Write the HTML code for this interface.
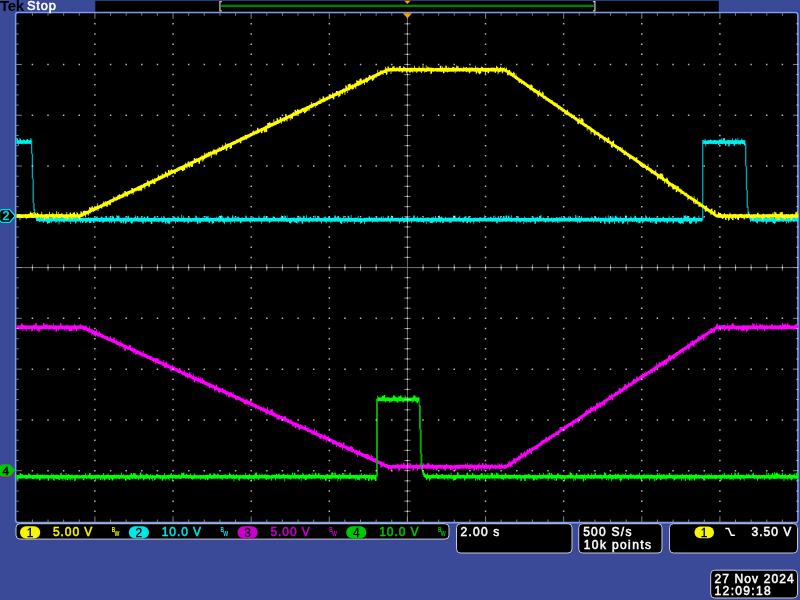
<!DOCTYPE html>
<html><head><meta charset="utf-8"><title>Tek</title>
<style>html,body{margin:0;padding:0;}body{width:800px;height:600px;overflow:hidden;background:#3b4a98;}svg{display:block;}text{font-family:"Liberation Sans",sans-serif;}</style></head><body>
<svg width="800" height="600" viewBox="0 0 800 600">
<rect x="0" y="0" width="800" height="600" fill="#3b4a98"/>
<g transform="scale(0.78125)">
<path d="M21 14.4H1022" stroke="#323f8a" stroke-width="1.4" fill="none"/>
<rect x="122" y="1" width="798" height="15" fill="#000"/>
<rect x="1021" y="15" width="3" height="655" fill="#2f3c8e"/>
<rect x="20" y="16" width="1001.3" height="653" rx="3" ry="3" fill="#000" stroke="#78a0f0" stroke-width="2"/>
<path d="M40.5 178.6V196.7M41.5 196.7V228.9M42.5 228.9V259.7M43.5 259.7V269.8M899.5 179.2V281.8M954.5 183.6V212.6M955.5 212.6V243.3M956.5 243.3V265.8" stroke="#00a8b4" stroke-width="1.7" fill="none"/>
<path d="M21 176.8H22L22 177.2H23L23 179.5H24L24 179.4H25L25 176.7H26L26 177.8H27L27 179.5H28L28 179.4H29L29 179.6H30L30 178.0H31L31 179.2H32L32 179.8H33L33 179.3H34L34 178.2H35L35 178.0H36L36 179.6H37L37 179.5H38L38 179.5H39L39 176.6H40L40 184.3H39L39 184.1H38L38 184.4H37L37 184.0H36L36 184.0H35L35 184.5H34L34 184.1H33L33 184.2H32L32 184.1H31L31 184.7H30L30 183.8H29L29 184.5H28L28 184.4H27L27 184.1H26L26 184.2H25L25 184.1H24L24 185.7H23L23 184.0H22L22 184.2H21ZM44 268.0H45L45 273.2H46L46 276.0H47L47 276.3H48L48 277.2H49L49 279.0H50L50 278.1H51L51 277.1H52L52 277.4H53L53 278.9H54L54 279.1H55L55 279.1H56L56 278.8H57L57 278.8H58L58 278.7H59L59 278.7H60L60 278.4H61L61 278.6H62L62 279.0H63L63 279.0H64L64 278.9H65L65 278.8H66L66 278.9H67L67 277.6H68L68 278.8H69L69 279.0H70L70 278.4H71L71 278.9H72L72 278.9H73L73 278.9H74L74 278.9H75L75 278.6H76L76 278.4H77L77 279.0H78L78 278.9H79L79 279.2H80L80 277.5H81L81 278.9H82L82 279.0H83L83 278.9H84L84 279.1H85L85 278.8H86L86 278.7H87L87 278.6H88L88 278.9H89L89 278.6H90L90 278.3H91L91 275.5H92L92 279.0H93L93 278.7H94L94 277.4H95L95 278.8H96L96 278.6H97L97 278.9H98L98 278.6H99L99 278.9H100L100 276.6H101L101 277.9H102L102 278.7H103L103 278.7H104L104 279.0H105L105 278.7H106L106 278.3H107L107 278.9H108L108 278.9H109L109 278.6H110L110 278.7H111L111 279.0H112L112 278.9H113L113 277.7H114L114 279.0H115L115 278.2H116L116 278.9H117L117 278.7H118L118 278.8H119L119 278.7H120L120 278.3H121L121 278.7H122L122 278.4H123L123 277.5H124L124 276.9H125L125 278.9H126L126 278.9H127L127 279.1H128L128 278.8H129L129 277.5H130L130 277.1H131L131 278.6H132L132 278.6H133L133 278.8H134L134 278.7H135L135 276.5H136L136 276.4H137L137 278.8H138L138 279.0H139L139 277.3H140L140 278.8H141L141 278.2H142L142 279.1H143L143 275.8H144L144 276.9H145L145 277.1H146L146 279.2H147L147 279.2H148L148 279.0H149L149 275.5H150L150 276.6H151L151 276.0H152L152 276.2H153L153 278.7H154L154 278.9H155L155 279.3H156L156 278.6H157L157 278.8H158L158 278.8H159L159 278.8H160L160 278.6H161L161 278.8H162L162 278.8H163L163 276.7H164L164 276.1H165L165 278.6H166L166 278.8H167L167 278.6H168L168 278.4H169L169 278.8H170L170 279.0H171L171 278.3H172L172 278.2H173L173 275.7H174L174 278.9H175L175 276.4H176L176 276.9H177L177 278.7H178L178 278.7H179L179 278.8H180L180 278.4H181L181 278.5H182L182 279.1H183L183 278.8H184L184 277.1H185L185 277.7H186L186 279.1H187L187 278.8H188L188 276.6H189L189 276.9H190L190 279.0H191L191 279.0H192L192 278.9H193L193 278.9H194L194 278.9H195L195 279.0H196L196 278.6H197L197 277.1H198L198 276.6H199L199 278.7H200L200 279.1H201L201 279.3H202L202 278.7H203L203 278.9H204L204 279.0H205L205 279.0H206L206 277.0H207L207 279.1H208L208 278.9H209L209 276.4H210L210 277.0H211L211 278.9H212L212 279.0H213L213 278.9H214L214 278.7H215L215 278.8H216L216 278.5H217L217 279.0H218L218 279.1H219L219 279.0H220L220 279.1H221L221 278.4H222L222 278.4H223L223 277.1H224L224 278.5H225L225 278.7H226L226 279.0H227L227 277.2H228L228 277.2H229L229 278.9H230L230 278.8H231L231 279.2H232L232 274.9H233L233 279.1H234L234 276.3H235L235 278.6H236L236 278.8H237L237 279.0H238L238 279.1H239L239 278.5H240L240 278.9H241L241 278.4H242L242 278.3H243L243 278.9H244L244 279.0H245L245 279.2H246L246 279.0H247L247 278.9H248L248 279.0H249L249 278.7H250L250 275.7H251L251 276.5H252L252 278.8H253L253 278.8H254L254 278.7H255L255 278.4H256L256 279.0H257L257 278.9H258L258 279.0H259L259 278.2H260L260 279.1H261L261 279.1H262L262 278.9H263L263 276.5H264L264 277.0H265L265 277.1H266L266 276.4H267L267 278.9H268L268 278.5H269L269 278.8H270L270 279.1H271L271 278.9H272L272 278.9H273L273 279.0H274L274 278.8H275L275 278.8H276L276 278.9H277L277 277.5H278L278 279.0H279L279 277.4H280L280 278.7H281L281 276.1H282L282 276.3H283L283 275.4H284L284 276.6H285L285 278.8H286L286 278.5H287L287 279.3H288L288 278.8H289L289 278.8H290L290 278.4H291L291 276.2H292L292 277.0H293L293 278.7H294L294 278.6H295L295 279.3H296L296 278.8H297L297 275.6H298L298 277.1H299L299 279.3H300L300 278.2H301L301 278.8H302L302 278.7H303L303 278.8H304L304 277.4H305L305 277.4H306L306 278.6H307L307 278.9H308L308 279.0H309L309 278.6H310L310 278.2H311L311 278.9H312L312 278.9H313L313 279.1H314L314 276.0H315L315 276.9H316L316 278.9H317L317 278.8H318L318 278.7H319L319 279.0H320L320 278.5H321L321 279.1H322L322 279.1H323L323 277.1H324L324 278.0H325L325 278.6H326L326 279.0H327L327 278.8H328L328 279.1H329L329 278.9H330L330 278.7H331L331 276.0H332L332 278.4H333L333 278.9H334L334 279.1H335L335 278.6H336L336 279.0H337L337 276.9H338L338 276.3H339L339 278.8H340L340 276.4H341L341 276.7H342L342 279.0H343L343 278.6H344L344 278.3H345L345 278.9H346L346 278.9H347L347 279.1H348L348 278.9H349L349 277.2H350L350 276.7H351L351 277.8H352L352 279.0H353L353 278.8H354L354 278.9H355L355 278.8H356L356 278.9H357L357 279.0H358L358 278.3H359L359 278.5H360L360 275.7H361L361 276.9H362L362 277.0H363L363 278.8H364L364 275.7H365L365 276.6H366L366 279.1H367L367 276.0H368L368 279.2H369L369 279.0H370L370 279.1H371L371 278.9H372L372 278.3H373L373 278.9H374L374 278.6H375L375 278.7H376L376 278.5H377L377 278.7H378L378 279.3H379L379 278.7H380L380 279.0H381L381 275.7H382L382 279.0H383L383 277.0H384L384 277.0H385L385 278.8H386L386 278.8H387L387 278.8H388L388 276.2H389L389 276.4H390L390 278.9H391L391 279.0H392L392 275.6H393L393 279.1H394L394 278.7H395L395 278.9H396L396 278.1H397L397 277.6H398L398 278.6H399L399 279.2H400L400 278.6H401L401 279.0H402L402 279.2H403L403 275.9H404L404 278.7H405L405 278.9H406L406 276.6H407L407 276.6H408L408 277.2H409L409 279.0H410L410 279.1H411L411 278.9H412L412 279.0H413L413 279.2H414L414 278.5H415L415 277.4H416L416 277.0H417L417 278.6H418L418 278.6H419L419 278.6H420L420 277.3H421L421 276.9H422L422 278.8H423L423 279.0H424L424 279.0H425L425 278.7H426L426 278.8H427L427 278.8H428L428 275.9H429L429 275.7H430L430 278.6H431L431 277.8H432L432 276.5H433L433 276.5H434L434 278.6H435L435 278.4H436L436 278.6H437L437 279.4H438L438 279.0H439L439 276.1H440L440 279.2H441L441 278.9H442L442 278.7H443L443 278.8H444L444 279.1H445L445 276.3H446L446 276.5H447L447 278.7H448L448 279.0H449L449 275.2H450L450 279.1H451L451 279.0H452L452 279.1H453L453 278.8H454L454 278.8H455L455 278.4H456L456 279.0H457L457 278.8H458L458 276.3H459L459 279.4H460L460 279.0H461L461 279.1H462L462 278.9H463L463 279.2H464L464 279.3H465L465 278.8H466L466 278.6H467L467 279.0H468L468 278.8H469L469 278.6H470L470 278.7H471L471 278.7H472L472 276.6H473L473 277.7H474L474 278.9H475L475 278.4H476L476 278.6H477L477 278.7H478L478 278.7H479L479 278.3H480L480 279.0H481L481 278.5H482L482 277.1H483L483 279.0H484L484 278.7H485L485 278.3H486L486 279.0H487L487 278.5H488L488 277.0H489L489 279.2H490L490 276.7H491L491 279.1H492L492 279.0H493L493 278.4H494L494 279.1H495L495 278.8H496L496 276.3H497L497 276.4H498L498 279.2H499L499 278.5H500L500 279.0H501L501 276.0H502L502 276.5H503L503 278.6H504L504 278.9H505L505 279.0H506L506 278.8H507L507 278.8H508L508 278.9H509L509 278.5H510L510 278.7H511L511 279.2H512L512 279.1H513L513 278.9H514L514 278.3H515L515 276.8H516L516 278.9H517L517 279.0H518L518 279.0H519L519 276.8H520L520 278.3H521L521 278.7H522L522 278.8H523L523 278.7H524L524 279.2H525L525 279.0H526L526 278.8H527L527 279.0H528L528 278.8H529L529 276.0H530L530 275.9H531L531 278.9H532L532 278.1H533L533 279.1H534L534 276.9H535L535 279.0H536L536 278.8H537L537 279.0H538L538 278.1H539L539 278.8H540L540 279.0H541L541 278.7H542L542 278.8H543L543 279.1H544L544 278.7H545L545 278.6H546L546 278.8H547L547 278.2H548L548 278.5H549L549 278.8H550L550 279.0H551L551 279.1H552L552 278.2H553L553 278.5H554L554 277.3H555L555 278.9H556L556 278.8H557L557 276.5H558L558 278.6H559L559 279.0H560L560 278.9H561L561 276.5H562L562 275.7H563L563 278.5H564L564 277.7H565L565 277.1H566L566 278.6H567L567 279.0H568L568 279.3H569L569 278.8H570L570 277.6H571L571 279.0H572L572 278.8H573L573 278.8H574L574 278.4H575L575 278.6H576L576 278.7H577L577 278.5H578L578 278.6H579L579 278.8H580L580 276.0H581L581 276.6H582L582 276.0H583L583 278.5H584L584 279.0H585L585 279.0H586L586 278.0H587L587 278.4H588L588 276.2H589L589 278.9H590L590 278.9H591L591 278.7H592L592 278.7H593L593 278.7H594L594 277.5H595L595 277.2H596L596 276.6H597L597 278.9H598L598 278.8H599L599 276.9H600L600 277.6H601L601 279.2H602L602 279.1H603L603 279.1H604L604 279.2H605L605 279.1H606L606 278.9H607L607 278.7H608L608 278.5H609L609 278.8H610L610 279.1H611L611 278.6H612L612 278.9H613L613 278.5H614L614 278.1H615L615 278.1H616L616 278.9H617L617 278.6H618L618 278.7H619L619 278.8H620L620 275.4H621L621 278.9H622L622 279.4H623L623 278.9H624L624 278.8H625L625 278.0H626L626 278.9H627L627 277.3H628L628 277.4H629L629 278.8H630L630 279.0H631L631 276.6H632L632 278.9H633L633 275.7H634L634 278.4H635L635 278.7H636L636 279.0H637L637 277.1H638L638 276.8H639L639 278.9H640L640 277.2H641L641 279.3H642L642 279.2H643L643 278.4H644L644 276.4H645L645 276.7H646L646 279.1H647L647 276.1H648L648 276.0H649L649 279.0H650L650 276.1H651L651 276.3H652L652 278.7H653L653 278.4H654L654 275.6H655L655 279.1H656L656 278.6H657L657 279.1H658L658 278.3H659L659 278.6H660L660 278.9H661L661 278.7H662L662 277.0H663L663 276.7H664L664 278.6H665L665 279.0H666L666 279.0H667L667 278.8H668L668 278.9H669L669 278.8H670L670 279.1H671L671 277.2H672L672 278.7H673L673 278.9H674L674 278.9H675L675 278.9H676L676 278.6H677L677 278.9H678L678 278.9H679L679 278.9H680L680 279.1H681L681 278.8H682L682 277.2H683L683 278.8H684L684 278.7H685L685 278.4H686L686 278.5H687L687 278.0H688L688 277.7H689L689 279.1H690L690 276.5H691L691 276.2H692L692 275.3H693L693 279.2H694L694 278.8H695L695 278.5H696L696 278.9H697L697 279.2H698L698 279.1H699L699 279.0H700L700 279.1H701L701 278.7H702L702 278.6H703L703 279.2H704L704 279.1H705L705 278.6H706L706 278.2H707L707 279.2H708L708 278.7H709L709 279.1H710L710 278.9H711L711 278.6H712L712 277.7H713L713 278.4H714L714 278.8H715L715 278.8H716L716 277.7H717L717 278.7H718L718 276.8H719L719 278.9H720L720 278.8H721L721 278.6H722L722 277.1H723L723 278.2H724L724 279.0H725L725 278.7H726L726 278.6H727L727 276.8H728L728 279.0H729L729 276.9H730L730 277.3H731L731 278.9H732L732 278.6H733L733 278.7H734L734 279.1H735L735 279.1H736L736 275.2H737L737 278.6H738L738 275.8H739L739 279.0H740L740 278.8H741L741 278.7H742L742 278.8H743L743 278.7H744L744 276.8H745L745 278.7H746L746 278.8H747L747 279.2H748L748 278.6H749L749 278.7H750L750 278.9H751L751 278.5H752L752 278.6H753L753 278.8H754L754 279.6H755L755 278.8H756L756 279.1H757L757 277.2H758L758 278.4H759L759 279.2H760L760 279.0H761L761 277.4H762L762 276.9H763L763 278.5H764L764 279.0H765L765 278.8H766L766 277.4H767L767 279.3H768L768 278.6H769L769 278.6H770L770 279.1H771L771 278.8H772L772 278.8H773L773 279.0H774L774 278.9H775L775 276.7H776L776 278.9H777L777 279.2H778L778 275.4H779L779 279.1H780L780 278.2H781L781 277.5H782L782 278.3H783L783 278.6H784L784 276.1H785L785 278.8H786L786 278.7H787L787 276.3H788L788 276.3H789L789 277.8H790L790 278.6H791L791 278.7H792L792 278.6H793L793 278.7H794L794 276.8H795L795 278.9H796L796 278.9H797L797 279.0H798L798 278.7H799L799 279.0H800L800 276.0H801L801 275.9H802L802 279.0H803L803 279.3H804L804 278.7H805L805 279.0H806L806 278.8H807L807 276.9H808L808 278.4H809L809 278.9H810L810 278.8H811L811 278.8H812L812 276.3H813L813 276.4H814L814 278.5H815L815 278.6H816L816 279.0H817L817 278.7H818L818 278.8H819L819 279.1H820L820 277.8H821L821 278.8H822L822 278.6H823L823 278.5H824L824 278.9H825L825 279.1H826L826 275.4H827L827 276.7H828L828 278.8H829L829 278.8H830L830 279.1H831L831 277.3H832L832 278.9H833L833 278.9H834L834 278.8H835L835 278.8H836L836 278.6H837L837 278.7H838L838 279.1H839L839 279.1H840L840 278.6H841L841 278.7H842L842 278.8H843L843 279.0H844L844 278.9H845L845 278.8H846L846 279.0H847L847 278.9H848L848 277.4H849L849 277.4H850L850 279.1H851L851 278.9H852L852 279.1H853L853 279.0H854L854 278.9H855L855 278.8H856L856 276.1H857L857 278.9H858L858 278.8H859L859 278.7H860L860 278.8H861L861 279.2H862L862 278.8H863L863 279.0H864L864 278.8H865L865 278.8H866L866 278.6H867L867 278.6H868L868 278.3H869L869 279.1H870L870 278.8H871L871 278.6H872L872 278.5H873L873 279.3H874L874 279.1H875L875 275.7H876L876 276.1H877L877 275.6H878L878 277.3H879L879 275.7H880L880 276.7H881L881 278.3H882L882 278.8H883L883 278.8H884L884 278.7H885L885 279.0H886L886 278.9H887L887 277.6H888L888 277.5H889L889 276.8H890L890 278.7H891L891 278.8H892L892 279.0H893L893 278.9H894L894 276.2H895L895 278.9H896L896 279.0H897L897 279.0H898L898 279.1H899L899 283.6H898L898 283.6H897L897 283.4H896L896 283.1H895L895 283.4H894L894 283.6H893L893 283.6H892L892 285.9H891L891 286.4H890L890 283.6H889L889 283.7H888L888 283.4H887L887 283.6H886L886 285.5H885L885 286.7H884L884 286.5H883L883 286.2H882L882 283.2H881L881 283.7H880L880 283.8H879L879 283.9H878L878 283.3H877L877 283.6H876L876 283.9H875L875 286.8H874L874 285.8H873L873 285.6H872L872 286.5H871L871 286.4H870L870 285.3H869L869 285.0H868L868 283.7H867L867 283.6H866L866 284.4H865L865 283.5H864L864 283.4H863L863 285.5H862L862 286.8H861L861 283.6H860L860 283.4H859L859 283.4H858L858 285.1H857L857 283.1H856L856 284.0H855L855 285.7H854L854 285.9H853L853 283.6H852L852 283.7H851L851 284.8H850L850 283.8H849L849 283.6H848L848 283.4H847L847 283.4H846L846 284.7H845L845 284.7H844L844 283.4H843L843 283.9H842L842 283.4H841L841 286.6H840L840 286.2H839L839 286.0H838L838 283.2H837L837 283.4H836L836 285.2H835L835 283.3H834L834 285.0H833L833 284.8H832L832 283.6H831L831 283.9H830L830 283.5H829L829 283.5H828L828 283.4H827L827 283.0H826L826 283.4H825L825 283.4H824L824 284.7H823L823 286.1H822L822 283.6H821L821 283.6H820L820 285.7H819L819 285.6H818L818 285.7H817L817 283.4H816L816 285.1H815L815 284.1H814L814 283.3H813L813 283.8H812L812 283.7H811L811 283.4H810L810 284.1H809L809 283.5H808L808 283.5H807L807 283.6H806L806 283.4H805L805 283.8H804L804 287.4H803L803 283.2H802L802 283.4H801L801 284.0H800L800 283.5H799L799 286.1H798L798 285.8H797L797 286.7H796L796 283.6H795L795 283.9H794L794 283.3H793L793 285.8H792L792 285.0H791L791 283.3H790L790 283.6H789L789 283.4H788L788 283.6H787L787 286.7H786L786 283.5H785L785 283.7H784L784 284.7H783L783 283.7H782L782 283.8H781L781 286.3H780L780 286.1H779L779 283.7H778L778 284.0H777L777 283.7H776L776 283.5H775L775 286.9H774L774 286.3H773L773 283.5H772L772 283.6H771L771 283.3H770L770 285.4H769L769 285.4H768L768 283.6H767L767 283.8H766L766 283.3H765L765 283.7H764L764 283.7H763L763 283.2H762L762 283.4H761L761 283.6H760L760 285.0H759L759 283.3H758L758 283.5H757L757 284.3H756L756 283.6H755L755 283.9H754L754 283.4H753L753 283.4H752L752 283.6H751L751 283.7H750L750 283.8H749L749 283.5H748L748 283.9H747L747 283.9H746L746 283.3H745L745 283.3H744L744 285.0H743L743 283.8H742L742 285.6H741L741 283.4H740L740 285.7H739L739 283.9H738L738 284.0H737L737 283.8H736L736 283.4H735L735 283.6H734L734 283.9H733L733 283.2H732L732 283.3H731L731 283.3H730L730 283.8H729L729 284.0H728L728 283.4H727L727 283.6H726L726 283.4H725L725 283.3H724L724 283.6H723L723 284.0H722L722 283.4H721L721 283.4H720L720 283.7H719L719 283.4H718L718 283.9H717L717 283.5H716L716 285.4H715L715 283.5H714L714 285.2H713L713 283.8H712L712 283.5H711L711 285.1H710L710 283.6H709L709 284.3H708L708 285.0H707L707 283.7H706L706 283.5H705L705 283.6H704L704 283.5H703L703 284.0H702L702 284.9H701L701 283.4H700L700 283.8H699L699 284.7H698L698 284.7H697L697 283.5H696L696 283.5H695L695 283.3H694L694 283.6H693L693 283.4H692L692 283.5H691L691 283.5H690L690 283.7H689L689 283.7H688L688 283.5H687L687 283.2H686L686 286.4H685L685 286.5H684L684 283.5H683L683 283.9H682L682 283.5H681L681 284.0H680L680 285.0H679L679 284.6H678L678 283.5H677L677 284.1H676L676 283.7H675L675 283.7H674L674 285.4H673L673 283.8H672L672 283.7H671L671 286.7H670L670 283.3H669L669 283.3H668L668 283.6H667L667 284.6H666L666 284.7H665L665 283.8H664L664 283.5H663L663 283.3H662L662 286.2H661L661 283.6H660L660 283.9H659L659 283.7H658L658 283.3H657L657 283.5H656L656 283.8H655L655 284.2H654L654 283.9H653L653 283.5H652L652 283.5H651L651 283.3H650L650 283.4H649L649 283.9H648L648 283.7H647L647 283.7H646L646 283.3H645L645 283.6H644L644 284.4H643L643 283.6H642L642 283.8H641L641 283.8H640L640 283.8H639L639 283.8H638L638 283.4H637L637 286.1H636L636 285.9H635L635 283.5H634L634 283.9H633L633 283.6H632L632 283.5H631L631 284.0H630L630 283.8H629L629 283.5H628L628 283.4H627L627 283.6H626L626 283.6H625L625 283.5H624L624 283.4H623L623 283.7H622L622 283.5H621L621 283.2H620L620 283.5H619L619 283.6H618L618 283.4H617L617 283.4H616L616 283.2H615L615 283.6H614L614 285.3H613L613 283.4H612L612 284.0H611L611 283.6H610L610 283.9H609L609 283.2H608L608 283.8H607L607 287.1H606L606 283.8H605L605 283.6H604L604 283.7H603L603 285.9H602L602 284.5H601L601 283.6H600L600 284.2H599L599 285.7H598L598 285.9H597L597 283.1H596L596 283.4H595L595 283.6H594L594 285.2H593L593 284.8H592L592 283.9H591L591 283.3H590L590 283.7H589L589 283.7H588L588 283.4H587L587 283.7H586L586 283.5H585L585 283.8H584L584 283.7H583L583 283.4H582L582 283.6H581L581 283.5H580L580 283.4H579L579 283.5H578L578 285.5H577L577 284.8H576L576 285.3H575L575 283.8H574L574 283.9H573L573 283.7H572L572 283.7H571L571 283.9H570L570 283.6H569L569 284.0H568L568 285.3H567L567 285.9H566L566 283.3H565L565 283.7H564L564 285.6H563L563 283.7H562L562 283.8H561L561 283.9H560L560 283.4H559L559 285.6H558L558 283.5H557L557 283.6H556L556 285.2H555L555 283.8H554L554 285.8H553L553 285.4H552L552 285.0H551L551 285.3H550L550 283.5H549L549 283.4H548L548 283.7H547L547 283.2H546L546 286.8H545L545 283.6H544L544 283.4H543L543 285.5H542L542 284.2H541L541 284.0H540L540 284.2H539L539 284.0H538L538 283.7H537L537 283.7H536L536 284.5H535L535 283.8H534L534 284.8H533L533 283.3H532L532 283.3H531L531 283.4H530L530 283.4H529L529 283.6H528L528 283.4H527L527 285.9H526L526 283.2H525L525 283.8H524L524 283.9H523L523 283.4H522L522 286.0H521L521 283.8H520L520 283.7H519L519 284.0H518L518 284.7H517L517 285.1H516L516 283.3H515L515 283.3H514L514 283.5H513L513 284.0H512L512 286.4H511L511 283.8H510L510 283.4H509L509 283.5H508L508 283.4H507L507 283.6H506L506 283.3H505L505 283.5H504L504 283.5H503L503 283.4H502L502 283.3H501L501 283.5H500L500 286.1H499L499 283.9H498L498 283.3H497L497 283.5H496L496 283.4H495L495 284.0H494L494 283.4H493L493 283.9H492L492 283.6H491L491 284.1H490L490 283.5H489L489 283.7H488L488 283.6H487L487 283.4H486L486 283.9H485L485 283.4H484L484 284.9H483L483 283.5H482L482 284.1H481L481 283.8H480L480 283.9H479L479 283.7H478L478 283.7H477L477 285.2H476L476 283.4H475L475 283.6H474L474 283.5H473L473 284.1H472L472 283.3H471L471 283.7H470L470 283.6H469L469 284.2H468L468 284.0H467L467 287.0H466L466 283.7H465L465 283.6H464L464 285.1H463L463 285.5H462L462 286.5H461L461 284.0H460L460 284.1H459L459 283.8H458L458 283.8H457L457 283.7H456L456 284.1H455L455 283.7H454L454 286.6H453L453 283.6H452L452 284.0H451L451 283.4H450L450 283.9H449L449 284.2H448L448 283.6H447L447 284.3H446L446 283.6H445L445 285.9H444L444 283.5H443L443 283.8H442L442 283.5H441L441 285.6H440L440 283.2H439L439 283.7H438L438 286.6H437L437 286.3H436L436 285.5H435L435 283.4H434L434 283.7H433L433 283.8H432L432 283.5H431L431 283.5H430L430 283.9H429L429 284.2H428L428 283.3H427L427 284.0H426L426 284.0H425L425 283.8H424L424 285.8H423L423 283.5H422L422 283.7H421L421 283.7H420L420 283.4H419L419 283.4H418L418 286.0H417L417 283.7H416L416 283.7H415L415 283.4H414L414 283.4H413L413 283.5H412L412 286.1H411L411 283.7H410L410 283.4H409L409 283.2H408L408 283.3H407L407 283.8H406L406 283.8H405L405 284.1H404L404 283.3H403L403 283.5H402L402 283.6H401L401 283.7H400L400 283.8H399L399 283.5H398L398 283.3H397L397 284.4H396L396 285.0H395L395 283.7H394L394 283.5H393L393 283.5H392L392 283.7H391L391 283.7H390L390 283.5H389L389 283.6H388L388 286.3H387L387 286.1H386L386 283.3H385L385 283.6H384L384 283.3H383L383 285.2H382L382 283.5H381L381 286.0H380L380 285.3H379L379 284.9H378L378 285.1H377L377 283.7H376L376 283.4H375L375 283.5H374L374 284.3H373L373 286.1H372L372 286.2H371L371 285.6H370L370 283.5H369L369 283.9H368L368 284.1H367L367 283.9H366L366 283.2H365L365 283.8H364L364 283.7H363L363 283.7H362L362 283.3H361L361 283.7H360L360 283.5H359L359 283.5H358L358 283.2H357L357 284.8H356L356 283.3H355L355 283.6H354L354 283.2H353L353 283.7H352L352 283.5H351L351 283.6H350L350 283.4H349L349 283.6H348L348 283.7H347L347 283.7H346L346 285.0H345L345 285.2H344L344 283.5H343L343 283.5H342L342 283.6H341L341 283.4H340L340 283.1H339L339 283.7H338L338 283.2H337L337 284.2H336L336 283.4H335L335 286.5H334L334 283.6H333L333 283.6H332L332 283.6H331L331 283.6H330L330 283.5H329L329 283.5H328L328 283.7H327L327 283.5H326L326 284.0H325L325 283.0H324L324 283.7H323L323 283.8H322L322 283.6H321L321 285.4H320L320 284.2H319L319 282.8H318L318 283.4H317L317 283.3H316L316 283.5H315L315 283.7H314L314 283.6H313L313 283.8H312L312 283.5H311L311 283.5H310L310 283.8H309L309 285.7H308L308 285.9H307L307 283.6H306L306 283.6H305L305 283.8H304L304 283.4H303L303 283.5H302L302 283.3H301L301 285.8H300L300 283.6H299L299 283.6H298L298 283.8H297L297 283.4H296L296 287.0H295L295 283.8H294L294 283.7H293L293 283.9H292L292 283.9H291L291 284.4H290L290 284.0H289L289 283.7H288L288 286.9H287L287 284.9H286L286 284.5H285L285 284.0H284L284 283.2H283L283 283.8H282L282 283.8H281L281 285.0H280L280 284.0H279L279 283.2H278L278 283.6H277L277 283.4H276L276 283.3H275L275 283.1H274L274 285.8H273L273 285.8H272L272 286.9H271L271 283.4H270L270 283.3H269L269 285.0H268L268 285.3H267L267 283.7H266L266 283.7H265L265 283.9H264L264 283.7H263L263 283.8H262L262 283.5H261L261 283.7H260L260 283.5H259L259 283.6H258L258 284.2H257L257 285.8H256L256 285.6H255L255 283.4H254L254 286.5H253L253 286.4H252L252 283.8H251L251 283.7H250L250 283.7H249L249 283.5H248L248 283.4H247L247 283.6H246L246 284.1H245L245 284.2H244L244 283.8H243L243 283.6H242L242 285.3H241L241 286.3H240L240 283.8H239L239 283.4H238L238 283.8H237L237 284.4H236L236 285.2H235L235 283.5H234L234 283.9H233L233 284.0H232L232 283.6H231L231 283.7H230L230 283.5H229L229 283.6H228L228 284.1H227L227 283.7H226L226 283.6H225L225 286.2H224L224 283.5H223L223 283.6H222L222 283.3H221L221 283.5H220L220 284.0H219L219 283.6H218L218 286.1H217L217 287.0H216L216 286.1H215L215 285.7H214L214 283.7H213L213 287.0H212L212 285.8H211L211 283.6H210L210 284.3H209L209 284.4H208L208 285.4H207L207 283.5H206L206 283.6H205L205 283.5H204L204 284.7H203L203 284.3H202L202 283.4H201L201 284.0H200L200 284.0H199L199 283.4H198L198 283.7H197L197 283.4H196L196 283.5H195L195 286.6H194L194 286.7H193L193 284.1H192L192 283.5H191L191 283.7H190L190 283.7H189L189 283.5H188L188 283.7H187L187 285.0H186L186 283.4H185L185 283.9H184L184 286.5H183L183 286.0H182L182 284.1H181L181 283.5H180L180 283.7H179L179 283.9H178L178 284.1H177L177 283.4H176L176 283.4H175L175 283.1H174L174 283.5H173L173 283.5H172L172 283.4H171L171 283.6H170L170 285.7H169L169 286.4H168L168 285.3H167L167 283.6H166L166 283.5H165L165 284.2H164L164 283.5H163L163 284.3H162L162 286.2H161L161 286.3H160L160 283.3H159L159 286.2H158L158 285.2H157L157 283.6H156L156 285.6H155L155 285.7H154L154 283.8H153L153 283.6H152L152 283.2H151L151 283.6H150L150 283.1H149L149 283.4H148L148 283.5H147L147 286.2H146L146 283.4H145L145 283.7H144L144 283.5H143L143 285.9H142L142 283.7H141L141 285.8H140L140 283.4H139L139 283.4H138L138 283.5H137L137 283.7H136L136 283.9H135L135 283.6H134L134 284.2H133L133 284.7H132L132 285.3H131L131 283.5H130L130 283.7H129L129 283.9H128L128 284.2H127L127 283.8H126L126 283.3H125L125 283.8H124L124 283.3H123L123 284.0H122L122 283.3H121L121 285.9H120L120 285.0H119L119 283.6H118L118 283.2H117L117 285.6H116L116 285.4H115L115 285.5H114L114 283.4H113L113 283.8H112L112 284.2H111L111 285.1H110L110 285.6H109L109 283.2H108L108 283.6H107L107 284.4H106L106 285.4H105L105 283.1H104L104 286.2H103L103 283.9H102L102 283.5H101L101 283.6H100L100 283.4H99L99 283.2H98L98 285.1H97L97 286.0H96L96 283.4H95L95 283.9H94L94 283.6H93L93 283.7H92L92 283.4H91L91 286.8H90L90 283.4H89L89 283.9H88L88 284.0H87L87 283.5H86L86 283.6H85L85 283.4H84L84 283.3H83L83 284.9H82L82 284.9H81L81 284.0H80L80 283.6H79L79 283.7H78L78 283.3H77L77 283.7H76L76 287.4H75L75 283.2H74L74 283.7H73L73 283.7H72L72 285.4H71L71 283.6H70L70 283.5H69L69 283.1H68L68 283.5H67L67 283.4H66L66 285.9H65L65 283.6H64L64 285.5H63L63 285.5H62L62 286.1H61L61 286.3H60L60 283.7H59L59 283.5H58L58 283.9H57L57 283.4H56L56 285.4H55L55 283.6H54L54 283.6H53L53 283.6H52L52 283.6H51L51 284.3H50L50 283.3H49L49 283.3H48L48 283.2H47L47 282.5H46L46 279.7H45L45 276.9H44ZM900 179.5H901L901 179.7H902L902 177.6H903L903 179.7H904L904 179.7H905L905 179.7H906L906 179.4H907L907 179.2H908L908 179.4H909L909 178.4H910L910 179.3H911L911 179.7H912L912 179.8H913L913 179.4H914L914 179.2H915L915 179.3H916L916 179.5H917L917 179.7H918L918 179.6H919L919 179.8H920L920 179.1H921L921 178.0H922L922 179.0H923L923 177.5H924L924 179.5H925L925 176.7H926L926 177.3H927L927 176.8H928L928 179.8H929L929 179.7H930L930 179.4H931L931 179.3H932L932 179.2H933L933 179.4H934L934 179.2H935L935 179.6H936L936 179.6H937L937 177.1H938L938 179.4H939L939 179.6H940L940 179.6H941L941 177.6H942L942 178.1H943L943 179.4H944L944 176.2H945L945 179.6H946L946 179.5H947L947 179.4H948L948 179.2H949L949 177.2H950L950 179.2H951L951 179.4H952L952 179.6H953L953 179.4H954L954 186.6H953L953 185.9H952L952 184.2H951L951 184.3H950L950 184.0H949L949 184.0H948L948 185.9H947L947 184.6H946L946 185.4H945L945 183.9H944L944 184.2H943L943 184.7H942L942 184.7H941L941 186.2H940L940 187.2H939L939 184.2H938L938 184.3H937L937 184.2H936L936 184.0H935L935 184.7H934L934 187.5H933L933 187.2H932L932 184.2H931L931 184.1H930L930 186.2H929L929 186.7H928L928 184.4H927L927 184.1H926L926 184.5H925L925 184.4H924L924 184.4H923L923 184.4H922L922 183.9H921L921 185.6H920L920 185.6H919L919 184.1H918L918 184.7H917L917 184.3H916L916 184.8H915L915 183.9H914L914 184.3H913L913 184.8H912L912 184.1H911L911 184.2H910L910 184.1H909L909 184.0H908L908 184.2H907L907 184.5H906L906 184.3H905L905 184.2H904L904 187.7H903L903 184.5H902L902 184.0H901L901 184.2H900ZM957 264.0H958L958 271.0H959L959 274.8H960L960 277.0H961L961 278.0H962L962 276.6H963L963 276.6H964L964 277.3H965L965 279.2H966L966 279.0H967L967 276.2H968L968 278.8H969L969 278.8H970L970 278.8H971L971 276.5H972L972 279.0H973L973 278.6H974L974 276.2H975L975 275.8H976L976 278.9H977L977 278.5H978L978 276.8H979L979 276.5H980L980 279.2H981L981 278.7H982L982 278.8H983L983 279.2H984L984 278.8H985L985 278.7H986L986 278.8H987L987 278.8H988L988 278.9H989L989 278.8H990L990 278.7H991L991 279.2H992L992 278.4H993L993 276.5H994L994 277.2H995L995 276.3H996L996 277.9H997L997 279.0H998L998 278.8H999L999 278.9H1000L1000 278.5H1001L1001 275.8H1002L1002 278.5H1003L1003 278.9H1004L1004 278.8H1005L1005 278.9H1006L1006 279.2H1007L1007 278.5H1008L1008 278.5H1009L1009 278.8H1010L1010 278.9H1011L1011 278.8H1012L1012 278.8H1013L1013 276.4H1014L1014 278.9H1015L1015 276.6H1016L1016 279.2H1017L1017 276.1H1018L1018 278.8H1019L1019 278.9H1020L1020 278.4H1021L1021 278.9H1022L1022 283.6H1021L1021 283.9H1020L1020 283.5H1019L1019 283.2H1018L1018 283.5H1017L1017 283.7H1016L1016 283.8H1015L1015 283.3H1014L1014 283.6H1013L1013 283.4H1012L1012 284.1H1011L1011 283.4H1010L1010 285.4H1009L1009 283.7H1008L1008 283.3H1007L1007 286.2H1006L1006 283.5H1005L1005 283.3H1004L1004 283.6H1003L1003 284.1H1002L1002 283.4H1001L1001 283.5H1000L1000 283.1H999L999 283.6H998L998 283.7H997L997 283.7H996L996 283.9H995L995 283.2H994L994 284.0H993L993 285.8H992L992 286.9H991L991 285.4H990L990 285.7H989L989 283.8H988L988 283.8H987L987 283.7H986L986 283.6H985L985 284.6H984L984 283.9H983L983 283.7H982L982 285.9H981L981 286.8H980L980 283.4H979L979 283.4H978L978 284.6H977L977 284.8H976L976 283.9H975L975 283.7H974L974 283.4H973L973 283.6H972L972 283.5H971L971 283.6H970L970 286.2H969L969 285.5H968L968 283.8H967L967 283.7H966L966 283.2H965L965 283.5H964L964 283.4H963L963 282.8H962L962 282.5H961L961 284.1H960L960 280.7H959L959 278.3H958L958 274.5H957Z" fill="#00f0f0"/>
<path d="" stroke="#c8c800" stroke-width="1.6" fill="none"/>
<path d="M21 273.9H22L22 274.0H23L23 274.0H24L24 273.9H25L25 273.9H26L26 274.2H27L27 274.3H28L28 274.2H29L29 274.4H30L30 274.2H31L31 274.3H32L32 273.8H33L33 274.3H34L34 273.8H35L35 274.1H36L36 273.7H37L37 273.9H38L38 272.0H39L39 270.7H40L40 272.5H41L41 273.1H42L42 271.5H43L43 274.1H44L44 271.2H45L45 272.6H46L46 273.8H47L47 272.1H48L48 272.8H49L49 273.8H50L50 274.3H51L51 274.2H52L52 273.8H53L53 270.9H54L54 274.2H55L55 274.7H56L56 274.3H57L57 274.3H58L58 273.9H59L59 274.0H60L60 273.8H61L61 274.1H62L62 274.2H63L63 271.1H64L64 274.2H65L65 274.0H66L66 274.3H67L67 272.3H68L68 273.7H69L69 274.1H70L70 274.2H71L71 273.9H72L72 270.4H73L73 273.9H74L74 271.2H75L75 273.9H76L76 274.0H77L77 274.0H78L78 273.3H79L79 273.0H80L80 274.3H81L81 274.3H82L82 274.4H83L83 274.5H84L84 273.9H85L85 271.5H86L86 274.1H87L87 274.3H88L88 274.2H89L89 272.4H90L90 272.1H91L91 274.0H92L92 273.9H93L93 272.2H94L94 271.9H95L95 271.7H96L96 274.1H97L97 274.2H98L98 271.4H99L99 272.6H100L100 274.4H101L101 274.1H102L102 273.6H103L103 270.5H104L104 271.1H105L105 272.2H106L106 270.1H107L107 269.7H108L108 269.8H109L109 270.1H110L110 269.9H111L111 270.1H112L112 269.3H113L113 268.4H114L114 264.9H115L115 265.6H116L116 265.8H117L117 264.4H118L118 264.0H119L119 266.0H120L120 265.3H121L121 265.0H122L122 264.6H123L123 264.1H124L124 260.3H125L125 263.1H126L126 263.0H127L127 262.3H128L128 261.8H129L129 261.4H130L130 261.0H131L131 259.8H132L132 258.0H133L133 259.2H134L134 257.9H135L135 257.7H136L136 258.0H137L137 257.3H138L138 257.3H139L139 256.3H140L140 255.8H141L141 255.4H142L142 254.9H143L143 254.6H144L144 253.8H145L145 251.6H146L146 252.4H147L147 252.9H148L148 251.8H149L149 251.7H150L150 250.3H151L151 249.8H152L152 248.6H153L153 248.6H154L154 249.6H155L155 249.1H156L156 248.2H157L157 246.4H158L158 247.3H159L159 244.4H160L160 244.6H161L161 245.9H162L162 245.2H163L163 244.8H164L164 244.5H165L165 243.8H166L166 243.7H167L167 243.2H168L168 240.7H169L169 240.8H170L170 241.6H171L171 241.2H172L172 240.6H173L173 240.3H174L174 239.9H175L175 239.2H176L176 238.6H177L177 238.1H178L178 237.9H179L179 237.3H180L180 236.7H181L181 236.1H182L182 236.4H183L183 235.3H184L184 235.0H185L185 234.4H186L186 234.2H187L187 233.7H188L188 230.8H189L189 230.9H190L190 232.3H191L191 231.6H192L192 231.1H193L193 231.0H194L194 230.2H195L195 228.7H196L196 229.9H197L197 228.6H198L198 228.6H199L199 228.1H200L200 227.7H201L201 226.8H202L202 223.8H203L203 224.9H204L204 225.5H205L205 224.7H206L206 224.7H207L207 222.2H208L208 223.0H209L209 223.5H210L210 222.7H211L211 219.3H212L212 220.2H213L213 221.5H214L214 221.0H215L215 217.6H216L216 217.2H217L217 219.3H218L218 217.5H219L219 216.3H220L220 217.6H221L221 217.5H222L222 217.1H223L223 216.5H224L224 216.2H225L225 215.4H226L226 215.3H227L227 214.2H228L228 214.1H229L229 213.1H230L230 213.5H231L231 212.5H232L232 212.5H233L233 211.9H234L234 211.5H235L235 211.0H236L236 210.1H237L237 208.3H238L238 209.6H239L239 209.3H240L240 206.9H241L241 206.4H242L242 207.7H243L243 206.6H244L244 206.8H245L245 206.1H246L246 205.8H247L247 205.4H248L248 202.3H249L249 202.5H250L250 203.5H251L251 202.6H252L252 203.0H253L253 202.1H254L254 201.9H255L255 201.2H256L256 200.5H257L257 200.2H258L258 198.5H259L259 199.8H260L260 199.0H261L261 195.4H262L262 197.7H263L263 196.4H264L264 196.1H265L265 196.3H266L266 194.4H267L267 194.9H268L268 194.1H269L269 193.5H270L270 194.3H271L271 193.7H272L272 192.8H273L273 191.2H274L274 191.4H275L275 191.9H276L276 191.5H277L277 191.4H278L278 190.1H279L279 190.0H280L280 188.1H281L281 189.2H282L282 188.7H283L283 188.2H284L284 185.4H285L285 187.6H286L286 186.3H287L287 186.4H288L288 182.8H289L289 185.1H290L290 184.3H291L291 183.7H292L292 183.8H293L293 183.3H294L294 183.1H295L295 182.5H296L296 181.7H297L297 181.5H298L298 180.7H299L299 180.4H300L300 180.1H301L301 179.9H302L302 178.6H303L303 178.4H304L304 178.4H305L305 177.6H306L306 176.9H307L307 176.4H308L308 175.4H309L309 175.6H310L310 174.8H311L311 174.5H312L312 174.3H313L313 172.9H314L314 172.4H315L315 172.9H316L316 172.2H317L317 172.2H318L318 171.6H319L319 171.0H320L320 170.4H321L321 170.1H322L322 169.6H323L323 168.1H324L324 167.0H325L325 168.4H326L326 167.5H327L327 167.1H328L328 166.8H329L329 163.5H330L330 164.1H331L331 165.6H332L332 164.9H333L333 164.5H334L334 163.7H335L335 163.5H336L336 163.1H337L337 162.5H338L338 162.1H339L339 161.4H340L340 160.6H341L341 160.6H342L342 157.5H343L343 157.3H344L344 156.7H345L345 156.3H346L346 157.9H347L347 157.4H348L348 157.1H349L349 156.7H350L350 152.7H351L351 155.4H352L352 155.3H353L353 155.0H354L354 151.2H355L355 151.7H356L356 153.3H357L357 153.1H358L358 149.9H359L359 149.8H360L360 151.6H361L361 151.2H362L362 150.4H363L363 150.1H364L364 149.7H365L365 145.9H366L366 146.1H367L367 148.4H368L368 147.9H369L369 147.3H370L370 147.0H371L371 146.6H372L372 145.4H373L373 145.5H374L374 144.4H375L375 143.4H376L376 144.3H377L377 140.4H378L378 140.7H379L379 142.1H380L380 139.8H381L381 140.0H382L382 140.9H383L383 140.6H384L384 140.1H385L385 139.6H386L386 138.6H387L387 138.3H388L388 138.0H389L389 137.5H390L390 137.2H391L391 136.7H392L392 136.0H393L393 135.8H394L394 135.6H395L395 134.7H396L396 134.2H397L397 133.9H398L398 130.5H399L399 132.8H400L400 132.3H401L401 131.9H402L402 131.7H403L403 131.4H404L404 130.9H405L405 130.2H406L406 129.7H407L407 129.0H408L408 128.8H409L409 125.0H410L410 127.5H411L411 126.8H412L412 126.4H413L413 123.1H414L414 123.4H415L415 125.4H416L416 125.1H417L417 124.2H418L418 123.6H419L419 123.6H420L420 123.2H421L421 121.4H422L422 120.4H423L423 121.3H424L424 121.4H425L425 118.4H426L426 120.1H427L427 118.9H428L428 119.4H429L429 118.5H430L430 116.5H431L431 116.5H432L432 116.8H433L433 116.8H434L434 116.2H435L435 115.4H436L436 115.1H437L437 114.9H438L438 113.9H439L439 113.2H440L440 113.2H441L441 113.3H442L442 109.1H443L443 109.8H444L444 111.9H445L445 108.1H446L446 107.4H447L447 107.3H448L448 107.1H449L449 109.0H450L450 108.5H451L451 107.9H452L452 108.2H453L453 107.0H454L454 107.0H455L455 106.4H456L456 102.6H457L457 103.1H458L458 103.4H459L459 103.4H460L460 101.2H461L461 100.2H462L462 100.7H463L463 102.9H464L464 102.3H465L465 101.5H466L466 101.6H467L467 100.4H468L468 99.1H469L469 99.5H470L470 99.6H471L471 98.7H472L472 96.3H473L473 96.1H474L474 97.2H475L475 96.9H476L476 96.2H477L477 95.8H478L478 95.4H479L479 95.0H480L480 94.6H481L481 93.7H482L482 93.6H483L483 89.4H484L484 92.5H485L485 92.1H486L486 90.3H487L487 90.2H488L488 90.2H489L489 90.3H490L490 89.9H491L491 89.3H492L492 88.9H493L493 85.3H494L494 87.5H495L495 87.6H496L496 84.7H497L497 85.6H498L498 87.3H499L499 86.6H500L500 87.1H501L501 86.9H502L502 85.1H503L503 85.2H504L504 84.5H505L505 86.8H506L506 87.1H507L507 86.4H508L508 86.5H509L509 86.7H510L510 86.5H511L511 84.5H512L512 84.4H513L513 86.9H514L514 87.0H515L515 86.9H516L516 85.1H517L517 85.7H518L518 86.6H519L519 86.6H520L520 87.0H521L521 87.0H522L522 86.8H523L523 87.2H524L524 86.7H525L525 86.8H526L526 86.4H527L527 87.1H528L528 86.8H529L529 87.0H530L530 84.1H531L531 86.8H532L532 87.1H533L533 87.1H534L534 87.1H535L535 86.6H536L536 84.8H537L537 86.7H538L538 87.0H539L539 86.9H540L540 86.7H541L541 83.8H542L542 86.9H543L543 86.8H544L544 87.4H545L545 83.6H546L546 86.9H547L547 85.1H548L548 86.0H549L549 86.8H550L550 86.2H551L551 87.0H552L552 86.5H553L553 87.0H554L554 86.6H555L555 86.9H556L556 87.3H557L557 86.9H558L558 86.8H559L559 87.0H560L560 87.0H561L561 87.1H562L562 86.9H563L563 84.1H564L564 84.1H565L565 87.0H566L566 85.2H567L567 87.0H568L568 86.5H569L569 87.0H570L570 83.9H571L571 84.1H572L572 86.6H573L573 86.9H574L574 85.6H575L575 87.1H576L576 86.6H577L577 87.0H578L578 86.8H579L579 85.5H580L580 85.7H581L581 86.2H582L582 86.9H583L583 86.8H584L584 84.0H585L585 84.8H586L586 84.9H587L587 87.0H588L588 87.1H589L589 86.6H590L590 86.8H591L591 87.3H592L592 87.1H593L593 85.4H594L594 86.5H595L595 86.8H596L596 86.0H597L597 85.9H598L598 87.1H599L599 86.6H600L600 86.8H601L601 86.5H602L602 86.7H603L603 86.5H604L604 86.5H605L605 86.9H606L606 86.8H607L607 87.2H608L608 84.2H609L609 86.8H610L610 86.4H611L611 86.7H612L612 86.7H613L613 87.2H614L614 86.9H615L615 86.8H616L616 85.2H617L617 85.8H618L618 86.8H619L619 87.2H620L620 86.7H621L621 86.7H622L622 86.8H623L623 87.1H624L624 86.6H625L625 86.8H626L626 86.9H627L627 86.7H628L628 87.0H629L629 86.2H630L630 86.8H631L631 86.7H632L632 86.3H633L633 87.0H634L634 87.2H635L635 84.3H636L636 85.3H637L637 86.5H638L638 87.4H639L639 87.1H640L640 85.1H641L641 86.5H642L642 87.0H643L643 86.4H644L644 87.2H645L645 86.5H646L646 87.6H647L647 88.1H648L648 86.3H649L649 89.6H650L650 90.2H651L651 89.6H652L652 89.4H653L653 91.4H654L654 91.9H655L655 93.4H656L656 93.8H657L657 91.7H658L658 93.1H659L659 96.5H660L660 94.0H661L661 97.4H662L662 98.3H663L663 99.3H664L664 99.5H665L665 100.6H666L666 101.1H667L667 101.6H668L668 102.8H669L669 103.1H670L670 103.8H671L671 104.3H672L672 105.4H673L673 105.6H674L674 106.6H675L675 107.4H676L676 108.1H677L677 108.6H678L678 109.5H679L679 107.8H680L680 108.5H681L681 109.6H682L682 112.6H683L683 112.5H684L684 113.5H685L685 113.9H686L686 114.9H687L687 115.5H688L688 116.0H689L689 116.6H690L690 114.8H691L691 118.0H692L692 118.5H693L693 119.7H694L694 117.0H695L695 118.3H696L696 122.1H697L697 122.3H698L698 122.8H699L699 123.9H700L700 124.5H701L701 125.5H702L702 125.7H703L703 126.6H704L704 127.1H705L705 128.0H706L706 128.3H707L707 128.7H708L708 130.3H709L709 130.9H710L710 131.0H711L711 131.7H712L712 132.6H713L713 132.6H714L714 134.3H715L715 134.7H716L716 135.4H717L717 136.1H718L718 136.9H719L719 137.5H720L720 137.9H721L721 139.1H722L722 139.6H723L723 140.8H724L724 140.7H725L725 141.7H726L726 140.1H727L727 142.7H728L728 143.6H729L729 144.4H730L730 145.4H731L731 145.2H732L732 146.6H733L733 146.5H734L734 147.8H735L735 147.3H736L736 149.5H737L737 149.7H738L738 150.7H739L739 151.6H740L740 152.0H741L741 150.3H742L742 153.7H743L743 151.3H744L744 151.3H745L745 151.8H746L746 153.1H747L747 157.0H748L748 157.8H749L749 158.4H750L750 158.7H751L751 159.7H752L752 160.3H753L753 161.2H754L754 161.3H755L755 162.2H756L756 162.6H757L757 164.0H758L758 164.5H759L759 165.0H760L760 165.7H761L761 166.6H762L762 167.3H763L763 168.2H764L764 168.7H765L765 169.2H766L766 169.4H767L767 171.0H768L768 171.4H769L769 172.2H770L770 173.0H771L771 173.3H772L772 173.7H773L773 175.3H774L774 174.9H775L775 176.0H776L776 176.6H777L777 177.2H778L778 175.3H779L779 176.2H780L780 179.9H781L781 180.4H782L782 181.4H783L783 181.3H784L784 180.4H785L785 179.5H786L786 183.9H787L787 184.6H788L788 185.2H789L789 185.7H790L790 186.9H791L791 186.9H792L792 188.0H793L793 188.2H794L794 188.5H795L795 189.8H796L796 188.5H797L797 191.4H798L798 192.1H799L799 192.9H800L800 192.7H801L801 194.2H802L802 194.3H803L803 195.9H804L804 195.9H805L805 196.8H806L806 197.4H807L807 198.0H808L808 198.7H809L809 199.5H810L810 199.8H811L811 201.2H812L812 201.0H813L813 202.1H814L814 201.2H815L815 201.7H816L816 204.8H817L817 205.1H818L818 205.6H819L819 206.1H820L820 207.5H821L821 207.7H822L822 208.2H823L823 209.2H824L824 209.4H825L825 210.7H826L826 210.9H827L827 212.4H828L828 212.6H829L829 209.6H830L830 214.0H831L831 214.4H832L832 215.4H833L833 215.5H834L834 216.8H835L835 217.5H836L836 218.3H837L837 218.8H838L838 219.1H839L839 217.2H840L840 220.7H841L841 221.4H842L842 222.4H843L843 222.8H844L844 223.1H845L845 221.7H846L846 222.3H847L847 221.8H848L848 223.4H849L849 226.5H850L850 228.1H851L851 228.5H852L852 229.2H853L853 227.2H854L854 228.1H855L855 230.7H856L856 232.1H857L857 233.0H858L858 233.6H859L859 234.5H860L860 234.3H861L861 235.5H862L862 235.5H863L863 236.8H864L864 237.0H865L865 237.3H866L866 238.7H867L867 237.7H868L868 238.3H869L869 241.3H870L870 241.3H871L871 242.3H872L872 242.6H873L873 243.8H874L874 244.6H875L875 245.1H876L876 246.3H877L877 246.6H878L878 246.8H879L879 247.7H880L880 248.9H881L881 249.3H882L882 250.1H883L883 250.9H884L884 251.1H885L885 251.5H886L886 252.7H887L887 253.3H888L888 251.3H889L889 254.6H890L890 255.1H891L891 256.0H892L892 253.7H893L893 257.5H894L894 258.1H895L895 258.7H896L896 258.8H897L897 260.4H898L898 260.3H899L899 261.8H900L900 262.3H901L901 263.1H902L902 263.8H903L903 263.8H904L904 262.9H905L905 265.5H906L906 266.4H907L907 267.2H908L908 267.8H909L909 268.1H910L910 267.2H911L911 267.0H912L912 270.1H913L913 271.0H914L914 268.8H915L915 269.5H916L916 273.7H917L917 274.2H918L918 274.2H919L919 271.5H920L920 272.3H921L921 272.8H922L922 272.5H923L923 273.9H924L924 274.4H925L925 274.4H926L926 273.9H927L927 272.7H928L928 274.2H929L929 274.1H930L930 274.1H931L931 273.9H932L932 274.6H933L933 273.7H934L934 272.2H935L935 274.4H936L936 274.3H937L937 274.2H938L938 274.0H939L939 274.1H940L940 273.7H941L941 273.8H942L942 274.1H943L943 274.3H944L944 274.2H945L945 274.3H946L946 273.8H947L947 273.8H948L948 273.5H949L949 273.8H950L950 274.2H951L951 274.7H952L952 274.1H953L953 274.2H954L954 274.4H955L955 273.6H956L956 274.4H957L957 274.0H958L958 274.0H959L959 273.7H960L960 274.5H961L961 274.3H962L962 274.4H963L963 274.5H964L964 274.0H965L965 274.3H966L966 274.4H967L967 274.1H968L968 274.3H969L969 272.3H970L970 272.3H971L971 274.4H972L972 274.2H973L973 274.5H974L974 274.5H975L975 273.9H976L976 274.1H977L977 273.4H978L978 274.2H979L979 274.3H980L980 274.3H981L981 273.8H982L982 274.1H983L983 274.2H984L984 273.6H985L985 274.2H986L986 273.8H987L987 274.2H988L988 273.7H989L989 272.1H990L990 274.1H991L991 271.1H992L992 271.7H993L993 271.9H994L994 274.0H995L995 274.0H996L996 273.9H997L997 274.0H998L998 271.3H999L999 272.2H1000L1000 271.5H1001L1001 271.5H1002L1002 274.3H1003L1003 274.5H1004L1004 274.1H1005L1005 274.3H1006L1006 274.0H1007L1007 274.4H1008L1008 274.4H1009L1009 274.0H1010L1010 274.6H1011L1011 274.1H1012L1012 274.1H1013L1013 273.8H1014L1014 273.7H1015L1015 274.2H1016L1016 274.4H1017L1017 274.1H1018L1018 271.4H1019L1019 271.8H1020L1020 270.1H1021L1021 273.8H1022L1022 278.7H1021L1021 278.6H1020L1020 279.3H1019L1019 279.1H1018L1018 278.6H1017L1017 278.8H1016L1016 278.6H1015L1015 279.1H1014L1014 281.4H1013L1013 282.0H1012L1012 278.9H1011L1011 278.9H1010L1010 279.1H1009L1009 280.0H1008L1008 279.5H1007L1007 279.0H1006L1006 280.3H1005L1005 281.1H1004L1004 280.7H1003L1003 279.4H1002L1002 279.2H1001L1001 278.6H1000L1000 278.9H999L999 278.6H998L998 281.6H997L997 281.6H996L996 278.8H995L995 281.8H994L994 278.7H993L993 279.4H992L992 278.4H991L991 278.7H990L990 278.6H989L989 279.0H988L988 278.6H987L987 278.3H986L986 280.7H985L985 278.9H984L984 279.2H983L983 278.6H982L982 278.5H981L981 278.6H980L980 278.5H979L979 278.9H978L978 279.0H977L977 281.9H976L976 281.0H975L975 279.0H974L974 278.7H973L973 278.6H972L972 278.9H971L971 278.6H970L970 278.8H969L969 278.7H968L968 279.1H967L967 278.9H966L966 279.2H965L965 279.2H964L964 281.3H963L963 278.7H962L962 279.1H961L961 278.9H960L960 278.6H959L959 278.8H958L958 279.1H957L957 279.2H956L956 279.5H955L955 278.5H954L954 280.0H953L953 281.3H952L952 279.3H951L951 279.0H950L950 279.2H949L949 278.8H948L948 278.7H947L947 279.0H946L946 281.7H945L945 281.4H944L944 280.8H943L943 278.8H942L942 280.4H941L941 279.1H940L940 278.6H939L939 281.8H938L938 281.7H937L937 280.4H936L936 278.8H935L935 279.2H934L934 281.7H933L933 282.6H932L932 279.2H931L931 278.7H930L930 281.6H929L929 281.4H928L928 278.8H927L927 278.9H926L926 280.1H925L925 280.4H924L924 279.1H923L923 278.6H922L922 278.8H921L921 278.8H920L920 278.7H919L919 278.6H918L918 278.5H917L917 278.2H916L916 277.4H915L915 276.8H914L914 276.2H913L913 275.2H912L912 274.3H911L911 274.5H910L910 274.5H909L909 272.4H908L908 272.3H907L907 271.1H906L906 270.3H905L905 270.0H904L904 271.5H903L903 270.5H902L902 267.7H901L901 266.9H900L900 266.2H899L899 265.7H898L898 265.0H897L897 264.4H896L896 264.5H895L895 264.7H894L894 262.1H893L893 261.5H892L892 260.8H891L891 260.9H890L890 261.3H889L889 258.7H888L888 260.6H887L887 257.1H886L886 256.9H885L885 255.7H884L884 255.7H883L883 254.5H882L882 254.6H881L881 256.4H880L880 252.7H879L879 251.6H878L878 251.1H877L877 250.8H876L876 249.8H875L875 248.7H874L874 248.3H873L873 247.8H872L872 249.0H871L871 246.4H870L870 245.9H869L869 245.2H868L868 244.1H867L867 245.8H866L866 246.1H865L865 242.2H864L864 242.3H863L863 242.6H862L862 242.7H861L861 241.2H860L860 239.1H859L859 238.5H858L858 237.4H857L857 239.4H856L856 239.1H855L855 235.6H854L854 235.1H853L853 233.8H852L852 232.8H851L851 234.9H850L850 231.7H849L849 231.6H848L848 230.8H847L847 229.5H846L846 229.7H845L845 228.8H844L844 228.1H843L843 228.6H842L842 230.0H841L841 226.0H840L840 225.1H839L839 224.4H838L838 223.7H837L837 223.0H836L836 222.2H835L835 222.5H834L834 222.0H833L833 220.5H832L832 219.6H831L831 218.8H830L830 217.9H829L829 217.5H828L828 218.2H827L827 216.2H826L826 215.2H825L825 214.7H824L824 215.0H823L823 214.7H822L822 213.4H821L821 213.0H820L820 212.5H819L819 211.1H818L818 210.0H817L817 209.0H816L816 208.6H815L815 208.0H814L814 207.1H813L813 206.5H812L812 205.8H811L811 205.2H810L810 204.3H809L809 203.6H808L808 202.9H807L807 203.9H806L806 204.3H805L805 200.9H804L804 200.2H803L803 199.6H802L802 198.6H801L801 198.1H800L800 198.7H799L799 198.3H798L798 195.9H797L797 195.4H796L796 194.9H795L795 193.9H794L794 193.5H793L793 192.8H792L792 191.7H791L791 193.7H790L790 190.4H789L789 190.0H788L788 189.4H787L787 188.2H786L786 187.7H785L785 187.4H784L784 189.4H783L783 188.4H782L782 185.1H781L781 184.5H780L780 183.5H779L779 182.9H778L778 183.1H777L777 181.8H776L776 181.2H775L775 180.3H774L774 182.4H773L773 179.3H772L772 178.4H771L771 177.4H770L770 177.1H769L769 176.5H768L768 178.5H767L767 174.8H766L766 174.2H765L765 173.1H764L764 172.9H763L763 172.3H762L762 174.2H761L761 172.7H760L760 169.8H759L759 169.3H758L758 169.0H757L757 171.8H756L756 167.4H755L755 166.2H754L754 165.6H753L753 164.8H752L752 167.2H751L751 163.3H750L750 162.8H749L749 162.6H748L748 161.6H747L747 161.0H746L746 160.2H745L745 159.5H744L744 159.4H743L743 158.4H742L742 157.4H741L741 159.0H740L740 158.8H739L739 155.8H738L738 154.7H737L737 154.2H736L736 153.3H735L735 152.8H734L734 152.0H733L733 151.2H732L732 151.4H731L731 150.1H730L730 149.3H729L729 148.9H728L728 148.0H727L727 147.4H726L726 146.8H725L725 147.4H724L724 145.9H723L723 145.7H722L722 143.4H721L721 143.2H720L720 142.9H719L719 141.8H718L718 141.2H717L717 140.1H716L716 139.8H715L715 139.7H714L714 138.0H713L713 137.5H712L712 136.7H711L711 136.2H710L710 135.6H709L709 135.0H708L708 134.3H707L707 133.2H706L706 132.9H705L705 132.1H704L704 131.4H703L703 130.9H702L702 130.3H701L701 129.3H700L700 128.6H699L699 128.5H698L698 126.9H697L697 126.5H696L696 126.3H695L695 125.1H694L694 124.3H693L693 123.7H692L692 122.9H691L691 122.0H690L690 123.7H689L689 123.6H688L688 121.1H687L687 119.6H686L686 118.9H685L685 118.4H684L684 119.0H683L683 117.4H682L682 116.5H681L681 115.5H680L680 115.1H679L679 115.7H678L678 113.9H677L677 112.8H676L676 112.6H675L675 111.5H674L674 111.0H673L673 109.9H672L672 109.3H671L671 108.8H670L670 108.0H669L669 106.9H668L668 107.7H667L667 105.6H666L666 106.2H665L665 105.8H664L664 104.4H663L663 103.2H662L662 102.5H661L661 101.9H660L660 101.0H659L659 100.2H658L658 99.4H657L657 98.9H656L656 98.3H655L655 97.2H654L654 97.1H653L653 96.4H652L652 95.3H651L651 96.5H650L650 96.4H649L649 93.1H648L648 92.8H647L647 92.1H646L646 91.5H645L645 91.4H644L644 94.2H643L643 92.9H642L642 91.2H641L641 91.8H640L640 92.2H639L639 92.8H638L638 95.1H637L637 91.6H636L636 91.5H635L635 93.1H634L634 93.1H633L633 91.6H632L632 91.7H631L631 91.4H630L630 91.5H629L629 91.8H628L628 91.3H627L627 91.9H626L626 93.9H625L625 93.8H624L624 91.7H623L623 92.1H622L622 94.7H621L621 92.2H620L620 91.5H619L619 91.7H618L618 91.4H617L617 91.2H616L616 93.7H615L615 94.5H614L614 94.9H613L613 93.8H612L612 91.6H611L611 93.4H610L610 94.9H609L609 91.7H608L608 91.8H607L607 91.8H606L606 91.1H605L605 91.6H604L604 91.4H603L603 91.8H602L602 93.2H601L601 94.0H600L600 91.7H599L599 91.6H598L598 92.4H597L597 91.7H596L596 91.5H595L595 91.1H594L594 91.7H593L593 91.6H592L592 91.7H591L591 91.3H590L590 91.2H589L589 92.1H588L588 91.2H587L587 91.5H586L586 91.6H585L585 91.7H584L584 91.5H583L583 93.7H582L582 91.4H581L581 91.9H580L580 91.7H579L579 91.6H578L578 92.1H577L577 91.6H576L576 91.7H575L575 91.7H574L574 91.7H573L573 92.7H572L572 91.8H571L571 92.2H570L570 91.4H569L569 93.3H568L568 94.2H567L567 91.5H566L566 92.0H565L565 92.2H564L564 91.6H563L563 91.7H562L562 91.5H561L561 91.8H560L560 92.0H559L559 91.4H558L558 91.3H557L557 91.3H556L556 92.0H555L555 91.9H554L554 91.4H553L553 94.0H552L552 94.6H551L551 91.5H550L550 91.2H549L549 91.6H548L548 91.2H547L547 91.7H546L546 92.2H545L545 91.9H544L544 92.8H543L543 91.2H542L542 91.2H541L541 91.5H540L540 93.4H539L539 91.7H538L538 91.4H537L537 91.6H536L536 91.4H535L535 91.7H534L534 93.5H533L533 91.5H532L532 91.8H531L531 91.4H530L530 91.6H529L529 93.0H528L528 91.8H527L527 91.8H526L526 92.8H525L525 93.0H524L524 91.7H523L523 91.6H522L522 92.0H521L521 93.7H520L520 91.7H519L519 91.1H518L518 91.5H517L517 91.5H516L516 92.8H515L515 92.8H514L514 91.3H513L513 91.4H512L512 92.0H511L511 91.6H510L510 91.4H509L509 91.0H508L508 91.5H507L507 91.6H506L506 91.6H505L505 91.2H504L504 91.5H503L503 91.4H502L502 91.5H501L501 94.8H500L500 91.2H499L499 91.9H498L498 92.0H497L497 91.4H496L496 95.1H495L495 95.9H494L494 93.5H493L493 93.4H492L492 93.5H491L491 95.6H490L490 95.0H489L489 95.0H488L488 95.8H487L487 96.5H486L486 97.1H485L485 97.3H484L484 97.6H483L483 98.1H482L482 99.7H481L481 99.2H480L480 100.2H479L479 102.1H478L478 102.9H477L477 103.7H476L476 101.3H475L475 101.9H474L474 102.2H473L473 102.9H472L472 103.6H471L471 105.4H470L470 106.2H469L469 105.1H468L468 105.3H467L467 108.7H466L466 106.3H465L465 107.0H464L464 107.2H463L463 108.1H462L462 108.4H461L461 108.9H460L460 109.7H459L459 110.4H458L458 109.9H457L457 110.4H456L456 114.0H455L455 112.0H454L454 112.1H453L453 113.8H452L452 114.9H451L451 113.7H450L450 114.3H449L449 114.3H448L448 115.6H447L447 115.9H446L446 115.8H445L445 119.2H444L444 116.5H443L443 117.5H442L442 121.7H441L441 118.4H440L440 118.5H439L439 121.1H438L438 119.6H437L437 120.0H436L436 123.0H435L435 123.5H434L434 124.5H433L433 122.0H432L432 122.7H431L431 122.8H430L430 123.1H429L429 123.9H428L428 126.9H427L427 127.3H426L426 125.3H425L425 125.5H424L424 126.2H423L423 126.6H422L422 127.3H421L421 127.5H420L420 128.4H419L419 128.4H418L418 129.0H417L417 129.8H416L416 130.4H415L415 131.0H414L414 131.0H413L413 131.1H412L412 132.3H411L411 132.7H410L410 133.1H409L409 133.3H408L408 133.8H407L407 134.8H406L406 135.7H405L405 135.5H404L404 137.8H403L403 135.8H402L402 136.7H401L401 137.4H400L400 137.8H399L399 138.7H398L398 138.3H397L397 141.6H396L396 139.8H395L395 141.6H394L394 141.9H393L393 142.7H392L392 143.8H391L391 144.7H390L390 145.2H389L389 143.4H388L388 142.8H387L387 143.9H386L386 144.7H385L385 145.2H384L384 145.3H383L383 146.1H382L382 146.5H381L381 147.0H380L380 148.1H379L379 148.3H378L378 148.1H377L377 148.5H376L376 148.8H375L375 151.9H374L374 152.7H373L373 151.0H372L372 154.2H371L371 151.4H370L370 151.6H369L369 152.3H368L368 155.6H367L367 154.2H366L366 153.8H365L365 156.0H364L364 155.1H363L363 155.2H362L362 155.6H361L361 158.3H360L360 156.5H359L359 157.3H358L358 157.7H357L357 158.4H356L356 158.6H355L355 158.8H354L354 159.9H353L353 160.1H352L352 160.8H351L351 160.9H350L350 161.2H349L349 162.2H348L348 162.2H347L347 163.0H346L346 163.5H345L345 163.9H344L344 164.5H343L343 164.6H342L342 168.6H341L341 169.2H340L340 168.8H339L339 169.6H338L338 167.0H337L337 168.0H336L336 170.1H335L335 170.5H334L334 168.7H333L333 169.4H332L332 170.3H331L331 170.6H330L330 171.1H329L329 172.0H328L328 171.6H327L327 172.1H326L326 173.1H325L325 173.0H324L324 173.9H323L323 174.1H322L322 174.5H321L321 175.3H320L320 176.0H319L319 176.0H318L318 177.4H317L317 177.3H316L316 179.0H315L315 178.1H314L314 178.9H313L313 179.1H312L312 179.5H311L311 179.9H310L310 180.4H309L309 183.0H308L308 183.7H307L307 181.8H306L306 182.3H305L305 182.8H304L304 183.4H303L303 183.8H302L302 184.7H301L301 184.5H300L300 185.3H299L299 185.7H298L298 186.0H297L297 189.5H296L296 190.1H295L295 190.8H294L294 188.2H293L293 188.5H292L292 189.3H291L291 192.7H290L290 193.4H289L289 190.3H288L288 191.1H287L287 191.9H286L286 192.1H285L285 192.3H284L284 193.4H283L283 193.5H282L282 193.8H281L281 194.0H280L280 194.6H279L279 195.3H278L278 197.6H277L277 198.9H276L276 196.8H275L275 197.6H274L274 197.9H273L273 197.9H272L272 198.0H271L271 202.1H270L270 199.3H269L269 200.3H268L268 200.2H267L267 201.4H266L266 201.3H265L265 202.0H264L264 202.2H263L263 203.3H262L262 203.7H261L261 205.5H260L260 207.0H259L259 204.3H258L258 205.3H257L257 205.9H256L256 209.5H255L255 209.6H254L254 206.9H253L253 207.4H252L252 207.9H251L251 208.8H250L250 209.1H249L249 209.1H248L248 210.0H247L247 213.6H246L246 213.8H245L245 213.6H244L244 212.2H243L243 214.6H242L242 212.9H241L241 213.2H240L240 215.6H239L239 214.6H238L238 214.3H237L237 217.5H236L236 218.0H235L235 218.8H234L234 219.2H233L233 217.7H232L232 217.4H231L231 217.9H230L230 218.6H229L229 218.8H228L228 219.6H227L227 220.3H226L226 220.1H225L225 222.7H224L224 223.2H223L223 221.5H222L222 222.1H221L221 222.7H220L220 223.1H219L219 223.7H218L218 224.6H217L217 224.8H216L216 224.9H215L215 227.5H214L214 226.3H213L213 226.3H212L212 227.2H211L211 227.4H210L210 227.9H209L209 228.9H208L208 228.9H207L207 229.6H206L206 230.0H205L205 230.4H204L204 231.0H203L203 231.1H202L202 231.8H201L201 232.4H200L200 232.7H199L199 235.6H198L198 235.9H197L197 235.2H196L196 234.6H195L195 235.1H194L194 236.0H193L193 235.9H192L192 238.8H191L191 239.6H190L190 237.9H189L189 237.9H188L188 238.1H187L187 239.2H186L186 242.3H185L185 239.9H184L184 240.4H183L183 240.5H182L182 244.0H181L181 244.7H180L180 243.4H179L179 244.1H178L178 244.4H177L177 243.9H176L176 244.3H175L175 244.9H174L174 244.9H173L173 245.3H172L172 246.5H171L171 249.1H170L170 247.3H169L169 248.0H168L168 247.8H167L167 248.1H166L166 249.0H165L165 249.4H164L164 251.2H163L163 252.1H162L162 250.7H161L161 251.5H160L160 251.5H159L159 252.4H158L158 252.7H157L157 253.3H156L156 253.8H155L155 254.1H154L154 255.2H153L153 255.1H152L152 255.5H151L151 256.1H150L150 256.6H149L149 257.0H148L148 257.1H147L147 257.6H146L146 258.6H145L145 259.1H144L144 258.9H143L143 259.5H142L142 262.4H141L141 262.9H140L140 261.5H139L139 262.2H138L138 264.7H137L137 264.5H136L136 263.4H135L135 264.0H134L134 264.2H133L133 264.7H132L132 265.1H131L131 267.2H130L130 266.7H129L129 266.3H128L128 267.0H127L127 267.4H126L126 270.0H125L125 268.3H124L124 269.0H123L123 269.0H122L122 270.3H121L121 270.0H120L120 271.2H119L119 270.8H118L118 271.5H117L117 272.2H116L116 273.2H115L115 273.0H114L114 275.7H113L113 274.1H112L112 275.0H111L111 274.5H110L110 278.0H109L109 275.9H108L108 276.2H107L107 277.1H106L106 277.4H105L105 277.7H104L104 278.1H103L103 281.1H102L102 281.7H101L101 278.9H100L100 278.6H99L99 278.6H98L98 278.6H97L97 279.3H96L96 278.8H95L95 278.9H94L94 278.5H93L93 280.6H92L92 280.0H91L91 278.6H90L90 279.3H89L89 278.5H88L88 280.3H87L87 280.6H86L86 278.9H85L85 282.2H84L84 279.1H83L83 279.3H82L82 278.9H81L81 278.4H80L80 278.6H79L79 278.7H78L78 279.1H77L77 278.9H76L76 279.0H75L75 278.9H74L74 278.9H73L73 278.8H72L72 278.7H71L71 279.0H70L70 279.4H69L69 280.6H68L68 278.7H67L67 278.8H66L66 278.3H65L65 278.7H64L64 278.4H63L63 279.5H62L62 280.6H61L61 279.0H60L60 279.9H59L59 278.7H58L58 281.5H57L57 281.8H56L56 278.7H55L55 279.0H54L54 278.7H53L53 278.8H52L52 278.9H51L51 278.5H50L50 278.8H49L49 278.9H48L48 278.7H47L47 279.0H46L46 278.4H45L45 278.8H44L44 279.0H43L43 278.9H42L42 278.6H41L41 279.1H40L40 278.6H39L39 278.6H38L38 279.0H37L37 278.9H36L36 278.9H35L35 278.9H34L34 280.7H33L33 278.9H32L32 278.8H31L31 278.9H30L30 278.8H29L29 279.1H28L28 279.1H27L27 279.1H26L26 282.0H25L25 278.8H24L24 278.9H23L23 279.0H22L22 278.7H21Z" fill="#ffff00"/>
<path d="" stroke="#c000c0" stroke-width="1.6" fill="none"/>
<path d="M21 416.3H22L22 416.5H23L23 416.3H24L24 416.5H25L25 416.9H26L26 416.0H27L27 414.2H28L28 413.8H29L29 415.9H30L30 416.1H31L31 416.8H32L32 416.2H33L33 416.4H34L34 416.5H35L35 416.6H36L36 416.7H37L37 416.5H38L38 416.6H39L39 416.4H40L40 416.5H41L41 416.6H42L42 416.1H43L43 415.1H44L44 416.6H45L45 413.3H46L46 413.3H47L47 416.4H48L48 416.5H49L49 416.9H50L50 416.8H51L51 416.5H52L52 416.2H53L53 416.7H54L54 416.8H55L55 413.4H56L56 413.8H57L57 416.0H58L58 415.4H59L59 415.2H60L60 414.6H61L61 416.7H62L62 416.3H63L63 416.1H64L64 416.2H65L65 416.6H66L66 415.9H67L67 416.6H68L68 413.7H69L69 416.8H70L70 416.5H71L71 416.1H72L72 416.5H73L73 416.5H74L74 416.6H75L75 416.4H76L76 416.7H77L77 413.1H78L78 414.5H79L79 416.6H80L80 416.2H81L81 416.5H82L82 416.8H83L83 416.3H84L84 416.9H85L85 415.3H86L86 416.8H87L87 416.1H88L88 417.0H89L89 416.6H90L90 416.7H91L91 416.8H92L92 416.5H93L93 416.7H94L94 416.5H95L95 414.7H96L96 415.9H97L97 416.6H98L98 416.7H99L99 416.5H100L100 416.3H101L101 416.5H102L102 415.0H103L103 414.9H104L104 416.8H105L105 416.8H106L106 416.6H107L107 417.1H108L108 417.7H109L109 416.4H110L110 417.1H111L111 419.0H112L112 419.6H113L113 419.7H114L114 417.2H115L115 421.1H116L116 421.0H117L117 421.7H118L118 421.7H119L119 422.3H120L120 423.4H121L121 423.5H122L122 423.8H123L123 421.2H124L124 424.3H125L125 425.6H126L126 425.7H127L127 424.0H128L128 425.8H129L129 427.0H130L130 427.5H131L131 427.8H132L132 428.7H133L133 429.0H134L134 429.7H135L135 429.5H136L136 430.5H137L137 430.5H138L138 431.7H139L139 431.8H140L140 432.0H141L141 430.1H142L142 432.9H143L143 433.3H144L144 434.4H145L145 431.7H146L146 432.1H147L147 435.4H148L148 436.3H149L149 434.4H150L150 436.9H151L151 437.0H152L152 437.8H153L153 438.4H154L154 435.7H155L155 439.1H156L156 439.3H157L157 439.8H158L158 440.5H159L159 441.2H160L160 441.3H161L161 441.4H162L162 442.2H163L163 442.9H164L164 443.1H165L165 441.6H166L166 442.1H167L167 441.9H168L168 445.3H169L169 444.7H170L170 445.9H171L171 446.2H172L172 445.1H173L173 447.2H174L174 448.1H175L175 448.5H176L176 448.0H177L177 448.9H178L178 449.6H179L179 448.8H180L180 450.6H181L181 451.1H182L182 451.2H183L183 449.1H184L184 452.4H185L185 452.3H186L186 453.2H187L187 453.1H188L188 454.4H189L189 454.7H190L190 455.0H191L191 455.8H192L192 455.8H193L193 455.7H194L194 457.1H195L195 457.6H196L196 458.3H197L197 458.3H198L198 458.3H199L199 459.2H200L200 458.4H201L201 458.2H202L202 459.1H203L203 460.3H204L204 461.3H205L205 461.9H206L206 462.6H207L207 462.5H208L208 463.6H209L209 461.1H210L210 464.2H211L211 464.4H212L212 463.2H213L213 462.9H214L214 465.7H215L215 466.4H216L216 466.7H217L217 467.4H218L218 467.9H219L219 468.1H220L220 467.0H221L221 467.7H222L222 469.6H223L223 469.6H224L224 470.6H225L225 471.1H226L226 471.1H227L227 472.0H228L228 472.6H229L229 471.2H230L230 471.1H231L231 473.3H232L232 474.6H233L233 474.8H234L234 475.5H235L235 475.2H236L236 473.6H237L237 476.8H238L238 476.5H239L239 477.2H240L240 478.0H241L241 478.3H242L242 475.7H243L243 477.1H244L244 479.3H245L245 480.1H246L246 480.8H247L247 478.1H248L248 481.3H249L249 482.1H250L250 482.4H251L251 482.1H252L252 483.4H253L253 483.9H254L254 480.9H255L255 484.8H256L256 482.8H257L257 485.7H258L258 483.1H259L259 484.2H260L260 486.4H261L261 486.6H262L262 487.7H263L263 488.2H264L264 489.1H265L265 489.2H266L266 489.8H267L267 489.6H268L268 490.5H269L269 490.0H270L270 491.6H271L271 491.8H272L272 492.4H273L273 492.9H274L274 493.2H275L275 494.2H276L276 492.0H277L277 492.5H278L278 495.5H279L279 495.8H280L280 496.3H281L281 496.4H282L282 497.1H283L283 497.6H284L284 496.2H285L285 497.3H286L286 498.7H287L287 499.2H288L288 498.3H289L289 500.3H290L290 500.9H291L291 500.9H292L292 501.3H293L293 502.0H294L294 502.3H295L295 501.1H296L296 502.1H297L297 504.2H298L298 502.2H299L299 504.9H300L300 505.5H301L301 505.7H302L302 506.3H303L303 506.5H304L304 506.8H305L305 507.1H306L306 508.0H307L307 507.8H308L308 509.2H309L309 509.4H310L310 509.9H311L311 510.2H312L312 511.0H313L313 511.3H314L314 511.7H315L315 510.6H316L316 510.9H317L317 512.5H318L318 513.4H319L319 513.6H320L320 510.7H321L321 512.0H322L322 515.1H323L323 516.0H324L324 516.4H325L325 516.4H326L326 517.1H327L327 517.5H328L328 517.9H329L329 519.0H330L330 518.4H331L331 519.5H332L332 520.1H333L333 520.7H334L334 520.8H335L335 521.3H336L336 521.8H337L337 520.5H338L338 521.9H339L339 523.0H340L340 523.6H341L341 523.9H342L342 521.1H343L343 525.2H344L344 525.6H345L345 526.1H346L346 523.7H347L347 523.9H348L348 523.3H349L349 525.9H350L350 528.1H351L351 528.0H352L352 528.9H353L353 529.2H354L354 530.1H355L355 530.4H356L356 530.9H357L357 530.9H358L358 532.0H359L359 532.0H360L360 532.4H361L361 532.8H362L362 533.6H363L363 533.6H364L364 532.2H365L365 532.4H366L366 535.4H367L367 536.0H368L368 536.1H369L369 536.3H370L370 537.3H371L371 537.0H372L372 536.8H373L373 538.5H374L374 539.2H375L375 539.7H376L376 540.4H377L377 540.4H378L378 540.7H379L379 541.2H380L380 541.7H381L381 542.3H382L382 542.1H383L383 543.6H384L384 543.4H385L385 543.9H386L386 544.2H387L387 544.7H388L388 545.5H389L389 546.1H390L390 544.1H391L391 544.4H392L392 547.5H393L393 547.5H394L394 548.3H395L395 547.0H396L396 549.5H397L397 549.7H398L398 549.7H399L399 550.0H400L400 551.0H401L401 551.2H402L402 548.2H403L403 552.5H404L404 550.6H405L405 550.9H406L406 553.8H407L407 554.2H408L408 554.3H409L409 555.7H410L410 555.3H411L411 555.5H412L412 556.4H413L413 557.0H414L414 557.5H415L415 555.7H416L416 556.6H417L417 558.5H418L418 559.5H419L419 559.4H420L420 557.7H421L421 560.4H422L422 560.5H423L423 561.3H424L424 561.9H425L425 562.1H426L426 562.8H427L427 563.2H428L428 563.6H429L429 564.0H430L430 564.6H431L431 565.3H432L432 565.7H433L433 566.0H434L434 566.1H435L435 567.1H436L436 567.0H437L437 567.4H438L438 568.4H439L439 566.5H440L440 566.0H441L441 570.0H442L442 570.5H443L443 570.5H444L444 570.9H445L445 571.8H446L446 571.9H447L447 572.4H448L448 571.1H449L449 570.7H450L450 571.8H451L451 572.3H452L452 574.8H453L453 575.3H454L454 575.7H455L455 576.2H456L456 576.0H457L457 576.7H458L458 577.6H459L459 576.7H460L460 575.3H461L461 578.5H462L462 579.4H463L463 579.5H464L464 580.0H465L465 580.5H466L466 581.1H467L467 581.3H468L468 581.2H469L469 581.2H470L470 581.0H471L471 581.9H472L472 582.1H473L473 584.1H474L474 584.4H475L475 582.5H476L476 583.3H477L477 586.2H478L478 586.5H479L479 586.8H480L480 586.4H481L481 587.0H482L482 588.6H483L483 588.9H484L484 589.5H485L485 589.6H486L486 590.3H487L487 590.4H488L488 591.1H489L489 591.7H490L490 592.0H491L491 589.7H492L492 593.4H493L493 593.5H494L494 593.7H495L495 594.1H496L496 594.7H497L497 595.2H498L498 595.1H499L499 595.3H500L500 595.5H501L501 595.3H502L502 595.0H503L503 595.1H504L504 595.0H505L505 595.3H506L506 595.2H507L507 595.0H508L508 593.2H509L509 594.3H510L510 594.8H511L511 595.3H512L512 594.8H513L513 593.2H514L514 594.1H515L515 595.1H516L516 592.4H517L517 593.0H518L518 594.9H519L519 595.2H520L520 595.1H521L521 593.2H522L522 592.8H523L523 595.1H524L524 592.3H525L525 593.3H526L526 594.9H527L527 595.0H528L528 595.5H529L529 595.1H530L530 595.2H531L531 595.3H532L532 595.2H533L533 593.2H534L534 595.2H535L535 595.2H536L536 595.2H537L537 593.5H538L538 593.1H539L539 595.1H540L540 595.1H541L541 592.5H542L542 593.7H543L543 594.9H544L544 594.5H545L545 595.0H546L546 593.2H547L547 592.9H548L548 592.3H549L549 593.5H550L550 595.0H551L551 594.9H552L552 595.1H553L553 593.8H554L554 595.0H555L555 595.3H556L556 595.5H557L557 595.0H558L558 595.0H559L559 595.2H560L560 595.3H561L561 594.8H562L562 595.2H563L563 594.9H564L564 595.0H565L565 595.3H566L566 594.8H567L567 595.3H568L568 595.1H569L569 594.8H570L570 594.8H571L571 593.6H572L572 594.8H573L573 595.2H574L574 595.2H575L575 595.4H576L576 595.3H577L577 594.9H578L578 595.5H579L579 595.7H580L580 595.5H581L581 595.0H582L582 595.5H583L583 595.1H584L584 595.0H585L585 595.2H586L586 594.5H587L587 595.2H588L588 594.8H589L589 595.0H590L590 594.8H591L591 595.0H592L592 595.0H593L593 594.9H594L594 595.1H595L595 593.3H596L596 594.3H597L597 594.9H598L598 592.7H599L599 595.2H600L600 595.0H601L601 594.4H602L602 594.4H603L603 594.4H604L604 594.8H605L605 594.8H606L606 595.6H607L607 594.6H608L608 595.1H609L609 595.2H610L610 595.6H611L611 594.6H612L612 594.3H613L613 592.4H614L614 595.2H615L615 595.2H616L616 595.5H617L617 592.5H618L618 592.9H619L619 595.1H620L620 595.2H621L621 592.9H622L622 593.3H623L623 595.0H624L624 595.1H625L625 595.0H626L626 595.0H627L627 595.1H628L628 595.1H629L629 593.5H630L630 594.7H631L631 595.7H632L632 595.2H633L633 594.9H634L634 594.9H635L635 595.4H636L636 595.5H637L637 592.7H638L638 594.9H639L639 593.6H640L640 595.1H641L641 594.1H642L642 592.2H643L643 595.1H644L644 595.6H645L645 595.1H646L646 594.4H647L647 594.9H648L648 594.6H649L649 593.8H650L650 590.3H651L651 592.4H652L652 589.5H653L653 591.5H654L654 590.8H655L655 589.3H656L656 589.4H657L657 585.9H658L658 586.1H659L659 587.1H660L660 586.5H661L661 585.7H662L662 585.3H663L663 582.6H664L664 584.1H665L665 583.3H666L666 579.6H667L667 579.1H668L668 581.5H669L669 580.8H670L670 579.0H671L671 577.4H672L672 579.2H673L673 578.3H674L674 575.1H675L675 575.4H676L676 576.0H677L677 573.4H678L678 574.1H679L679 574.0H680L680 572.7H681L681 572.6H682L682 571.7H683L683 571.4H684L684 571.0H685L685 570.3H686L686 569.5H687L687 568.9H688L688 568.3H689L689 567.8H690L690 566.7H691L691 566.5H692L692 563.4H693L693 564.4H694L694 563.5H695L695 562.9H696L696 562.8H697L697 561.9H698L698 559.5H699L699 559.5H700L700 560.2H701L701 559.6H702L702 558.7H703L703 557.5H704L704 557.8H705L705 556.6H706L706 556.2H707L707 555.4H708L708 554.8H709L709 554.5H710L710 553.8H711L711 552.0H712L712 552.3H713L713 551.9H714L714 551.1H715L715 550.7H716L716 547.2H717L717 546.7H718L718 546.5H719L719 546.8H720L720 546.9H721L721 546.0H722L722 544.5H723L723 544.7H724L724 544.4H725L725 543.5H726L726 542.7H727L727 541.9H728L728 541.6H729L729 541.3H730L730 540.0H731L731 539.6H732L732 538.5H733L733 538.0H734L734 537.5H735L735 537.2H736L736 536.1H737L737 535.9H738L738 534.9H739L739 534.8H740L740 533.8H741L741 533.0H742L742 532.3H743L743 531.4H744L744 531.2H745L745 530.2H746L746 529.8H747L747 528.6H748L748 528.2H749L749 526.1H750L750 524.1H751L751 524.4H752L752 525.8H753L753 523.0H754L754 524.5H755L755 521.5H756L756 521.5H757L757 519.8H758L758 521.8H759L759 519.7H760L760 520.5H761L761 519.9H762L762 519.2H763L763 515.9H764L764 515.3H765L765 516.4H766L766 516.5H767L767 514.6H768L768 515.2H769L769 514.9H770L770 513.8H771L771 513.4H772L772 512.4H773L773 511.8H774L774 511.0H775L775 510.3H776L776 510.0H777L777 509.3H778L778 508.4H779L779 506.1H780L780 505.5H781L781 506.7H782L782 503.7H783L783 504.8H784L784 505.0H785L785 503.9H786L786 503.1H787L787 501.2H788L788 501.9H789L789 501.0H790L790 500.8H791L791 500.1H792L792 496.5H793L793 496.4H794L794 497.5H795L795 497.5H796L796 496.5H797L797 495.6H798L798 494.4H799L799 491.6H800L800 491.6H801L801 493.6H802L802 492.4H803L803 492.4H804L804 488.7H805L805 490.7H806L806 490.3H807L807 489.9H808L808 488.6H809L809 487.3H810L810 485.1H811L811 484.4H812L812 485.8H813L813 485.4H814L814 482.2H815L815 481.5H816L816 483.5H817L817 483.2H818L818 482.0H819L819 481.0H820L820 479.4H821L821 479.6H822L822 477.7H823L823 478.7H824L824 476.6H825L825 477.7H826L826 475.1H827L827 476.4H828L828 475.8H829L829 475.0H830L830 474.2H831L831 473.8H832L832 472.7H833L833 472.0H834L834 471.6H835L835 471.3H836L836 470.2H837L837 469.1H838L838 468.8H839L839 467.9H840L840 464.3H841L841 466.9H842L842 466.2H843L843 464.1H844L844 463.8H845L845 464.0H846L846 463.7H847L847 461.6H848L848 462.4H849L849 461.4H850L850 460.7H851L851 460.3H852L852 459.9H853L853 458.9H854L854 458.7H855L855 456.0H856L856 454.8H857L857 454.0H858L858 455.5H859L859 455.2H860L860 454.6H861L861 453.8H862L862 453.0H863L863 452.6H864L864 451.9H865L865 451.0H866L866 450.6H867L867 449.8H868L868 449.0H869L869 447.7H870L870 447.6H871L871 446.8H872L872 446.5H873L873 445.3H874L874 445.1H875L875 444.6H876L876 443.6H877L877 443.4H878L878 442.7H879L879 441.5H880L880 438.8H881L881 440.7H882L882 440.0H883L883 436.8H884L884 438.8H885L885 436.6H886L886 435.6H887L887 436.6H888L888 435.7H889L889 435.5H890L890 434.5H891L891 434.2H892L892 433.0H893L893 430.1H894L894 430.5H895L895 430.9H896L896 430.6H897L897 429.5H898L898 426.8H899L899 428.6H900L900 427.2H901L901 427.3H902L902 426.2H903L903 426.1H904L904 425.4H905L905 424.5H906L906 424.1H907L907 420.9H908L908 422.9H909L909 420.4H910L910 419.9H911L911 420.7H912L912 420.4H913L913 419.2H914L914 418.8H915L915 418.1H916L916 416.8H917L917 414.7H918L918 414.2H919L919 416.6H920L920 416.3H921L921 416.0H922L922 416.8H923L923 416.4H924L924 416.3H925L925 416.1H926L926 416.1H927L927 416.0H928L928 416.7H929L929 417.0H930L930 416.8H931L931 414.2H932L932 416.7H933L933 416.2H934L934 416.6H935L935 416.5H936L936 415.1H937L937 413.5H938L938 413.6H939L939 415.6H940L940 416.3H941L941 416.9H942L942 417.0H943L943 416.5H944L944 416.9H945L945 416.5H946L946 416.5H947L947 417.1H948L948 416.9H949L949 416.6H950L950 416.4H951L951 416.2H952L952 416.3H953L953 416.3H954L954 416.7H955L955 416.7H956L956 416.5H957L957 416.4H958L958 416.4H959L959 416.5H960L960 416.5H961L961 416.4H962L962 416.5H963L963 413.4H964L964 414.3H965L965 414.3H966L966 416.5H967L967 416.5H968L968 413.5H969L969 416.6H970L970 416.9H971L971 416.5H972L972 414.0H973L973 415.0H974L974 416.4H975L975 415.7H976L976 415.0H977L977 416.8H978L978 416.3H979L979 416.2H980L980 416.5H981L981 415.8H982L982 416.7H983L983 417.1H984L984 416.4H985L985 416.5H986L986 416.8H987L987 415.1H988L988 414.7H989L989 416.6H990L990 416.6H991L991 416.3H992L992 416.4H993L993 416.8H994L994 416.7H995L995 416.4H996L996 416.8H997L997 416.4H998L998 416.1H999L999 415.9H1000L1000 416.8H1001L1001 413.6H1002L1002 414.3H1003L1003 415.8H1004L1004 414.3H1005L1005 414.8H1006L1006 416.5H1007L1007 414.5H1008L1008 412.9H1009L1009 416.0H1010L1010 416.1H1011L1011 416.6H1012L1012 416.6H1013L1013 416.5H1014L1014 416.7H1015L1015 416.8H1016L1016 416.4H1017L1017 416.4H1018L1018 414.6H1019L1019 414.5H1020L1020 416.8H1021L1021 416.7H1022L1022 421.1H1021L1021 421.4H1020L1020 420.8H1019L1019 421.4H1018L1018 421.2H1017L1017 421.4H1016L1016 421.8H1015L1015 421.6H1014L1014 421.6H1013L1013 421.4H1012L1012 421.4H1011L1011 421.0H1010L1010 421.4H1009L1009 421.2H1008L1008 421.6H1007L1007 421.7H1006L1006 421.7H1005L1005 421.3H1004L1004 421.7H1003L1003 421.6H1002L1002 421.6H1001L1001 422.6H1000L1000 421.4H999L999 421.5H998L998 421.4H997L997 421.7H996L996 421.3H995L995 422.0H994L994 421.4H993L993 421.2H992L992 421.3H991L991 423.1H990L990 421.2H989L989 421.4H988L988 421.3H987L987 421.4H986L986 421.5H985L985 420.9H984L984 421.2H983L983 421.2H982L982 421.8H981L981 421.1H980L980 423.1H979L979 423.6H978L978 421.6H977L977 421.8H976L976 421.6H975L975 421.3H974L974 421.2H973L973 421.8H972L972 420.9H971L971 422.5H970L970 423.5H969L969 421.4H968L968 421.4H967L967 421.3H966L966 421.5H965L965 421.2H964L964 421.3H963L963 421.0H962L962 421.2H961L961 421.3H960L960 421.4H959L959 421.7H958L958 423.2H957L957 424.0H956L956 424.5H955L955 421.7H954L954 421.3H953L953 424.0H952L952 423.2H951L951 424.4H950L950 423.3H949L949 423.1H948L948 421.6H947L947 421.3H946L946 423.2H945L945 421.6H944L944 422.2H943L943 422.7H942L942 421.1H941L941 421.4H940L940 421.1H939L939 420.9H938L938 421.3H937L937 421.1H936L936 421.1H935L935 421.9H934L934 424.2H933L933 423.8H932L932 421.9H931L931 420.9H930L930 421.5H929L929 421.3H928L928 423.8H927L927 421.1H926L926 421.4H925L925 421.1H924L924 420.8H923L923 422.6H922L922 423.3H921L921 421.1H920L920 424.3H919L919 421.7H918L918 421.5H917L917 422.1H916L916 423.3H915L915 426.1H914L914 426.6H913L913 425.0H912L912 426.1H911L911 426.2H910L910 426.7H909L909 427.7H908L908 428.0H907L907 429.0H906L906 429.7H905L905 429.9H904L904 433.6H903L903 431.2H902L902 434.6H901L901 435.9H900L900 433.2H899L899 434.1H898L898 434.9H897L897 435.2H896L896 436.3H895L895 437.2H894L894 437.6H893L893 437.8H892L892 439.5H891L891 439.3H890L890 439.9H889L889 444.2H888L888 443.3H887L887 442.5H886L886 442.4H885L885 443.6H884L884 444.0H883L883 447.1H882L882 447.9H881L881 445.7H880L880 446.8H879L879 447.6H878L878 448.6H877L877 448.5H876L876 449.2H875L875 453.6H874L874 451.1H873L873 451.1H872L872 452.2H871L871 452.7H870L870 453.3H869L869 453.9H868L868 454.9H867L867 455.7H866L866 456.2H865L865 457.0H864L864 459.2H863L863 460.1H862L862 459.3H861L861 459.2H860L860 459.6H859L859 462.1H858L858 461.4H857L857 461.8H856L856 463.3H855L855 463.3H854L854 466.2H853L853 467.5H852L852 467.5H851L851 466.2H850L850 470.1H849L849 467.4H848L848 468.3H847L847 468.3H846L846 469.7H845L845 469.5H844L844 470.4H843L843 471.2H842L842 471.8H841L841 472.1H840L840 474.1H839L839 475.9H838L838 475.9H837L837 474.8H836L836 477.3H835L835 476.7H834L834 477.1H833L833 478.0H832L832 479.0H831L831 479.1H830L830 479.5H829L829 480.2H828L828 481.7H827L827 481.5H826L826 485.0H825L825 482.5H824L824 483.8H823L823 484.2H822L822 486.5H821L821 485.9H820L820 486.0H819L819 486.9H818L818 487.7H817L817 488.6H816L816 488.5H815L815 489.7H814L814 490.6H813L813 490.7H812L812 491.5H811L811 492.1H810L810 493.1H809L809 493.8H808L808 494.2H807L807 494.6H806L806 496.0H805L805 495.9H804L804 496.9H803L803 500.4H802L802 498.6H801L801 498.7H800L800 499.2H799L799 500.3H798L798 501.1H797L797 501.8H796L796 502.2H795L795 504.3H794L794 503.3H793L793 504.2H792L792 504.8H791L791 506.3H790L790 505.9H789L789 506.9H788L788 507.4H787L787 507.9H786L786 508.6H785L785 511.8H784L784 512.7H783L783 510.4H782L782 511.7H781L781 512.1H780L780 512.8H779L779 513.6H778L778 513.9H777L777 515.1H776L776 515.2H775L775 517.5H774L774 519.3H773L773 518.3H772L772 519.8H771L771 518.5H770L770 521.1H769L769 522.7H768L768 520.6H767L767 521.6H766L766 523.4H765L765 522.8H764L764 523.9H763L763 526.0H762L762 527.2H761L761 525.1H760L760 527.0H759L759 526.6H758L758 527.1H757L757 528.2H756L756 528.8H755L755 529.0H754L754 529.6H753L753 530.7H752L752 531.2H751L751 531.8H750L750 532.8H749L749 533.8H748L748 533.6H747L747 534.6H746L746 537.8H745L745 536.4H744L744 536.8H743L743 537.4H742L742 538.0H741L741 541.2H740L740 540.9H739L739 539.9H738L738 540.7H737L737 541.3H736L736 541.8H735L735 543.0H734L734 546.2H733L733 547.0H732L732 544.7H731L731 545.2H730L730 545.5H729L729 545.9H728L728 547.2H727L727 548.2H726L726 548.9H725L725 549.1H724L724 550.0H723L723 550.9H722L722 551.4H721L721 551.9H720L720 552.8H719L719 552.6H718L718 553.4H717L717 554.2H716L716 556.5H715L715 557.0H714L714 556.9H713L713 556.9H712L712 557.9H711L711 558.6H710L710 559.3H709L709 559.8H708L708 559.8H707L707 561.1H706L706 561.8H705L705 562.3H704L704 563.6H703L703 564.0H702L702 564.6H701L701 566.7H700L700 566.1H699L699 566.3H698L698 566.8H697L697 567.7H696L696 568.1H695L695 568.7H694L694 571.0H693L693 570.3H692L692 571.1H691L691 571.6H690L690 572.2H689L689 574.5H688L688 574.7H687L687 574.9H686L686 575.1H685L685 575.6H684L684 576.1H683L683 577.1H682L682 577.2H681L681 581.5H680L680 580.4H679L679 579.5H678L678 579.8H677L677 580.6H676L676 581.8H675L675 582.0H674L674 584.5H673L673 585.7H672L672 584.2H671L671 584.6H670L670 585.3H669L669 586.1H668L668 586.6H667L667 587.4H666L666 591.2H665L665 588.9H664L664 589.3H663L663 589.8H662L662 591.0H661L661 593.1H660L660 593.8H659L659 592.8H658L658 593.2H657L657 594.2H656L656 597.6H655L655 596.9H654L654 598.5H653L653 596.9H652L652 597.6H651L651 598.2H650L650 598.7H649L649 599.5H648L648 599.8H647L647 600.1H646L646 599.9H645L645 599.9H644L644 599.6H643L643 600.2H642L642 599.6H641L641 600.3H640L640 600.2H639L639 599.8H638L638 599.9H637L637 599.8H636L636 600.1H635L635 600.5H634L634 600.0H633L633 599.4H632L632 600.4H631L631 599.6H630L630 599.5H629L629 599.8H628L628 600.6H627L627 601.9H626L626 599.8H625L625 599.8H624L624 600.4H623L623 599.8H622L622 600.1H621L621 601.1H620L620 602.3H619L619 599.7H618L618 599.7H617L617 602.8H616L616 599.8H615L615 599.9H614L614 599.7H613L613 602.7H612L612 599.7H611L611 601.0H610L610 601.5H609L609 599.6H608L608 602.4H607L607 602.9H606L606 600.0H605L605 599.7H604L604 599.7H603L603 599.7H602L602 600.4H601L601 600.2H600L600 600.0H599L599 599.7H598L598 599.9H597L597 600.1H596L596 599.4H595L595 599.8H594L594 600.0H593L593 599.8H592L592 599.6H591L591 599.8H590L590 600.3H589L589 599.9H588L588 600.3H587L587 600.0H586L586 600.2H585L585 599.8H584L584 602.9H583L583 602.6H582L582 599.8H581L581 600.0H580L580 601.9H579L579 600.1H578L578 601.5H577L577 601.7H576L576 599.7H575L575 599.6H574L574 600.0H573L573 599.7H572L572 599.9H571L571 602.2H570L570 602.6H569L569 600.2H568L568 600.5H567L567 599.8H566L566 599.9H565L565 600.0H564L564 600.0H563L563 599.8H562L562 599.8H561L561 600.0H560L560 601.5H559L559 602.6H558L558 600.7H557L557 599.7H556L556 600.0H555L555 601.5H554L554 599.7H553L553 600.1H552L552 599.8H551L551 600.2H550L550 599.6H549L549 600.0H548L548 600.0H547L547 600.0H546L546 600.3H545L545 599.8H544L544 599.8H543L543 599.6H542L542 600.2H541L541 600.2H540L540 601.6H539L539 599.7H538L538 600.2H537L537 599.9H536L536 600.3H535L535 602.7H534L534 599.6H533L533 599.7H532L532 599.9H531L531 599.7H530L530 601.9H529L529 603.1H528L528 599.8H527L527 600.0H526L526 599.9H525L525 599.5H524L524 600.0H523L523 599.4H522L522 599.7H521L521 600.0H520L520 602.2H519L519 599.4H518L518 599.7H517L517 599.9H516L516 599.8H515L515 599.8H514L514 599.8H513L513 599.8H512L512 602.4H511L511 603.5H510L510 599.8H509L509 599.8H508L508 599.6H507L507 600.0H506L506 600.0H505L505 599.8H504L504 599.8H503L503 600.1H502L502 602.2H501L501 602.2H500L500 600.0H499L499 600.1H498L498 601.7H497L497 599.7H496L496 599.5H495L495 598.6H494L494 598.4H493L493 597.9H492L492 597.1H491L491 596.7H490L490 597.6H489L489 598.1H488L488 599.0H487L487 594.8H486L486 594.5H485L485 593.9H484L484 593.7H483L483 595.2H482L482 592.9H481L481 592.8H480L480 591.6H479L479 591.3H478L478 591.0H477L477 590.3H476L476 589.7H475L475 589.3H474L474 589.0H473L473 588.3H472L472 588.3H471L471 588.4H470L470 587.4H469L469 586.9H468L468 586.6H467L467 585.8H466L466 585.6H465L465 584.7H464L464 584.5H463L463 584.3H462L462 583.5H461L461 583.3H460L460 582.3H459L459 582.0H458L458 585.0H457L457 582.4H456L456 581.8H455L455 580.4H454L454 580.1H453L453 579.0H452L452 579.3H451L451 578.5H450L450 578.5H449L449 577.6H448L448 577.2H447L447 576.9H446L446 578.7H445L445 575.9H444L444 575.4H443L443 575.1H442L442 574.3H441L441 573.9H440L440 573.4H439L439 576.3H438L438 572.9H437L437 572.3H436L436 572.9H435L435 572.5H434L434 571.3H433L433 570.2H432L432 570.3H431L431 572.5H430L430 569.3H429L429 568.6H428L428 568.6H427L427 569.6H426L426 568.2H425L425 566.8H424L424 566.1H423L423 565.3H422L422 565.7H421L421 564.8H420L420 564.2H419L419 564.0H418L418 566.8H417L417 563.0H416L416 562.3H415L415 564.8H414L414 561.7H413L413 561.4H412L412 561.0H411L411 561.8H410L410 561.8H409L409 560.0H408L408 559.0H407L407 558.0H406L406 558.7H405L405 557.3H404L404 557.2H403L403 556.7H402L402 556.5H401L401 556.0H400L400 556.7H399L399 555.2H398L398 554.0H397L397 554.0H396L396 553.2H395L395 552.9H394L394 552.5H393L393 551.8H392L392 551.3H391L391 550.9H390L390 550.5H389L389 550.1H388L388 549.2H387L387 549.5H386L386 548.7H385L385 548.7H384L384 550.7H383L383 550.2H382L382 547.1H381L381 546.8H380L380 546.1H379L379 548.1H378L378 547.9H377L377 544.6H376L376 546.0H375L375 545.9H374L374 543.5H373L373 543.2H372L372 542.5H371L371 542.0H370L370 541.3H369L369 541.3H368L368 540.7H367L367 540.0H366L366 539.8H365L365 539.4H364L364 538.4H363L363 538.0H362L362 538.1H361L361 539.0H360L360 536.7H359L359 536.4H358L358 537.4H357L357 537.2H356L356 536.4H355L355 538.0H354L354 534.3H353L353 533.7H352L352 534.2H351L351 532.9H350L350 532.7H349L349 532.2H348L348 531.3H347L347 531.3H346L346 530.4H345L345 530.9H344L344 529.4H343L343 529.5H342L342 530.7H341L341 531.0H340L340 528.1H339L339 527.4H338L338 527.1H337L337 526.5H336L336 526.0H335L335 525.3H334L334 526.6H333L333 524.7H332L332 524.3H331L331 523.9H330L330 523.5H329L329 522.5H328L328 524.5H327L327 521.9H326L326 521.7H325L325 520.5H324L324 520.8H323L323 520.1H322L322 519.7H321L321 519.2H320L320 518.2H319L319 521.0H318L318 517.5H317L317 517.9H316L316 517.1H315L315 518.8H314L314 517.0H313L313 517.1H312L312 515.4H311L311 514.8H310L310 514.4H309L309 513.4H308L308 513.4H307L307 512.6H306L306 512.1H305L305 512.2H304L304 511.3H303L303 512.5H302L302 511.8H301L301 510.1H300L300 509.5H299L299 509.7H298L298 508.6H297L297 508.5H296L296 507.8H295L295 507.5H294L294 508.8H293L293 508.7H292L292 505.5H291L291 505.6H290L290 507.5H289L289 505.1H288L288 504.3H287L287 503.3H286L286 503.3H285L285 502.6H284L284 502.2H283L283 501.9H282L282 503.1H281L281 502.4H280L280 502.0H279L279 500.1H278L278 499.6H277L277 499.4H276L276 499.8H275L275 501.0H274L274 497.4H273L273 497.2H272L272 496.6H271L271 496.4H270L270 495.8H269L269 497.1H268L268 497.1H267L267 494.5H266L266 494.1H265L265 493.8H264L264 493.1H263L263 492.9H262L262 492.2H261L261 491.4H260L260 491.4H259L259 490.6H258L258 490.7H257L257 490.5H256L256 489.6H255L255 489.0H254L254 491.2H253L253 488.4H252L252 487.5H251L251 487.1H250L250 489.2H249L249 489.9H248L248 486.2H247L247 485.9H246L246 484.8H245L245 484.4H244L244 484.2H243L243 483.4H242L242 483.1H241L241 484.5H240L240 483.4H239L239 482.1H238L238 483.0H237L237 481.2H236L236 480.5H235L235 480.0H234L234 479.9H233L233 479.2H232L232 478.1H231L231 477.9H230L230 477.7H229L229 477.3H228L228 477.1H227L227 476.2H226L226 475.6H225L225 475.3H224L224 474.7H223L223 474.1H222L222 474.3H221L221 473.9H220L220 474.8H219L219 475.5H218L218 473.4H217L217 471.5H216L216 471.3H215L215 470.8H214L214 470.7H213L213 470.4H212L212 470.9H211L211 470.8H210L210 468.4H209L209 468.1H208L208 467.6H207L207 466.9H206L206 466.6H205L205 466.7H204L204 465.8H203L203 465.8H202L202 464.8H201L201 464.5H200L200 464.8H199L199 465.8H198L198 462.8H197L197 463.9H196L196 462.1H195L195 461.9H194L194 461.0H193L193 460.7H192L192 460.6H191L191 459.3H190L190 459.6H189L189 459.3H188L188 458.7H187L187 457.9H186L186 457.7H185L185 457.2H184L184 456.4H183L183 456.2H182L182 456.2H181L181 455.4H180L180 454.9H179L179 454.0H178L178 454.0H177L177 453.7H176L176 453.1H175L175 454.1H174L174 454.2H173L173 451.3H172L172 452.9H171L171 451.1H170L170 450.1H169L169 449.7H168L168 449.6H167L167 448.8H166L166 448.0H165L165 447.8H164L164 447.7H163L163 447.2H162L162 446.3H161L161 448.9H160L160 448.9H159L159 445.2H158L158 446.9H157L157 444.2H156L156 443.9H155L155 443.0H154L154 445.7H153L153 442.7H152L152 442.2H151L151 441.6H150L150 441.2H149L149 440.9H148L148 440.0H147L147 439.4H146L146 439.4H145L145 439.1H144L144 438.0H143L143 437.7H142L142 437.1H141L141 436.8H140L140 436.4H139L139 435.9H138L138 435.7H137L137 435.2H136L136 434.9H135L135 434.1H134L134 433.7H133L133 433.3H132L132 432.9H131L131 432.2H130L130 432.3H129L129 431.5H128L128 431.0H127L127 430.5H126L126 432.3H125L125 429.7H124L124 429.0H123L123 431.0H122L122 430.3H121L121 429.3H120L120 428.4H119L119 427.6H118L118 429.6H117L117 426.0H116L116 425.5H115L115 425.2H114L114 426.5H113L113 424.0H112L112 423.9H111L111 423.8H110L110 423.0H109L109 422.4H108L108 424.2H107L107 422.1H106L106 421.5H105L105 421.1H104L104 421.5H103L103 421.1H102L102 420.9H101L101 421.6H100L100 421.0H99L99 423.3H98L98 424.2H97L97 421.0H96L96 421.4H95L95 424.0H94L94 421.2H93L93 423.8H92L92 423.6H91L91 424.1H90L90 423.9H89L89 423.8H88L88 421.0H87L87 421.4H86L86 421.4H85L85 424.4H84L84 421.4H83L83 422.9H82L82 421.1H81L81 421.1H80L80 421.4H79L79 421.5H78L78 421.6H77L77 421.4H76L76 421.9H75L75 423.6H74L74 421.3H73L73 424.2H72L72 424.6H71L71 421.2H70L70 422.7H69L69 421.4H68L68 421.6H67L67 421.6H66L66 421.6H65L65 421.3H64L64 421.0H63L63 423.4H62L62 421.4H61L61 420.9H60L60 421.2H59L59 421.6H58L58 421.6H57L57 421.2H56L56 421.2H55L55 421.2H54L54 421.6H53L53 421.3H52L52 421.1H51L51 424.6H50L50 424.8H49L49 423.1H48L48 423.4H47L47 421.6H46L46 421.1H45L45 422.8H44L44 420.9H43L43 421.3H42L42 423.9H41L41 424.3H40L40 421.2H39L39 421.0H38L38 421.0H37L37 421.2H36L36 421.3H35L35 421.6H34L34 424.6H33L33 421.3H32L32 421.0H31L31 421.0H30L30 423.8H29L29 421.3H28L28 421.4H27L27 422.2H26L26 421.1H25L25 423.2H24L24 421.1H23L23 421.1H22L22 421.2H21Z" fill="#ff00ff"/>
<path d="M482.5 510.4V610.4M537.5 518.9V549.6M538.5 549.6V580.8M539.5 580.8V596.9" stroke="#00b000" stroke-width="2.4" fill="none"/>
<path d="M21 607.6H22L22 608.1H23L23 607.9H24L24 608.2H25L25 605.8H26L26 605.5H27L27 607.2H28L28 606.3H29L29 607.9H30L30 608.0H31L31 607.9H32L32 607.8H33L33 607.9H34L34 607.8H35L35 608.0H36L36 605.9H37L37 606.3H38L38 607.0H39L39 608.0H40L40 608.4H41L41 608.0H42L42 607.8H43L43 608.0H44L44 608.1H45L45 607.9H46L46 607.7H47L47 605.3H48L48 607.5H49L49 607.7H50L50 608.1H51L51 608.0H52L52 607.5H53L53 607.9H54L54 607.5H55L55 607.9H56L56 607.5H57L57 608.2H58L58 607.7H59L59 607.6H60L60 608.0H61L61 607.8H62L62 607.9H63L63 608.3H64L64 607.6H65L65 607.9H66L66 605.3H67L67 608.0H68L68 607.2H69L69 608.0H70L70 608.0H71L71 607.8H72L72 607.6H73L73 607.6H74L74 607.8H75L75 607.9H76L76 608.4H77L77 605.8H78L78 605.2H79L79 607.9H80L80 607.8H81L81 607.8H82L82 607.9H83L83 608.2H84L84 605.5H85L85 608.1H86L86 607.7H87L87 606.6H88L88 607.8H89L89 607.9H90L90 608.1H91L91 607.8H92L92 607.5H93L93 607.9H94L94 608.5H95L95 607.9H96L96 608.1H97L97 607.7H98L98 607.8H99L99 608.0H100L100 608.3H101L101 607.9H102L102 608.2H103L103 608.2H104L104 607.6H105L105 607.7H106L106 608.0H107L107 607.9H108L108 607.9H109L109 605.8H110L110 608.1H111L111 608.5H112L112 607.2H113L113 607.9H114L114 605.4H115L115 605.4H116L116 608.4H117L117 607.8H118L118 608.0H119L119 608.2H120L120 608.1H121L121 607.9H122L122 607.8H123L123 607.8H124L124 607.5H125L125 608.0H126L126 607.5H127L127 608.0H128L128 608.2H129L129 607.9H130L130 608.1H131L131 607.8H132L132 605.3H133L133 607.7H134L134 608.2H135L135 607.9H136L136 607.8H137L137 607.8H138L138 606.0H139L139 608.1H140L140 608.0H141L141 608.1H142L142 608.0H143L143 608.1H144L144 607.9H145L145 607.8H146L146 607.4H147L147 608.1H148L148 607.8H149L149 607.8H150L150 608.0H151L151 607.8H152L152 607.7H153L153 608.2H154L154 607.8H155L155 604.9H156L156 608.1H157L157 607.8H158L158 606.7H159L159 608.3H160L160 608.1H161L161 608.1H162L162 608.1H163L163 607.7H164L164 608.4H165L165 608.0H166L166 607.8H167L167 606.5H168L168 605.4H169L169 607.8H170L170 605.6H171L171 606.0H172L172 605.6H173L173 606.1H174L174 608.1H175L175 608.3H176L176 608.3H177L177 608.2H178L178 607.9H179L179 604.7H180L180 604.7H181L181 607.6H182L182 607.5H183L183 608.1H184L184 608.2H185L185 607.7H186L186 607.3H187L187 606.0H188L188 606.6H189L189 607.8H190L190 608.0H191L191 608.4H192L192 607.1H193L193 608.5H194L194 607.8H195L195 608.0H196L196 608.2H197L197 608.3H198L198 608.6H199L199 608.0H200L200 606.6H201L201 606.6H202L202 607.7H203L203 608.0H204L204 607.9H205L205 608.0H206L206 608.2H207L207 608.0H208L208 608.3H209L209 607.9H210L210 605.4H211L211 608.2H212L212 608.2H213L213 608.0H214L214 608.1H215L215 607.4H216L216 608.1H217L217 607.7H218L218 606.3H219L219 605.5H220L220 608.0H221L221 607.8H222L222 607.0H223L223 607.9H224L224 607.7H225L225 608.0H226L226 607.9H227L227 608.0H228L228 607.4H229L229 607.3H230L230 608.2H231L231 607.6H232L232 604.8H233L233 605.8H234L234 605.1H235L235 604.9H236L236 607.8H237L237 607.8H238L238 606.8H239L239 607.1H240L240 607.9H241L241 608.1H242L242 608.0H243L243 605.7H244L244 607.7H245L245 607.9H246L246 608.2H247L247 608.3H248L248 605.8H249L249 606.9H250L250 608.0H251L251 607.9H252L252 607.8H253L253 608.5H254L254 608.0H255L255 607.9H256L256 608.0H257L257 608.0H258L258 608.2H259L259 608.0H260L260 607.7H261L261 608.3H262L262 608.1H263L263 607.9H264L264 607.6H265L265 607.7H266L266 607.9H267L267 607.8H268L268 605.8H269L269 606.0H270L270 608.3H271L271 607.9H272L272 607.9H273L273 605.7H274L274 606.1H275L275 606.4H276L276 608.0H277L277 607.8H278L278 606.1H279L279 606.5H280L280 608.2H281L281 608.1H282L282 608.0H283L283 607.9H284L284 608.1H285L285 608.0H286L286 607.9H287L287 607.5H288L288 607.2H289L289 608.2H290L290 607.7H291L291 608.0H292L292 608.1H293L293 604.9H294L294 606.3H295L295 607.2H296L296 607.9H297L297 608.0H298L298 606.5H299L299 608.1H300L300 607.7H301L301 608.2H302L302 606.6H303L303 607.9H304L304 608.1H305L305 608.2H306L306 607.9H307L307 607.4H308L308 608.3H309L309 607.9H310L310 607.9H311L311 607.6H312L312 608.0H313L313 607.9H314L314 605.0H315L315 608.0H316L316 607.9H317L317 608.1H318L318 607.3H319L319 606.5H320L320 607.9H321L321 607.8H322L322 608.2H323L323 608.2H324L324 607.9H325L325 607.8H326L326 604.9H327L327 605.9H328L328 604.5H329L329 607.9H330L330 608.3H331L331 607.7H332L332 606.5H333L333 607.9H334L334 607.8H335L335 605.8H336L336 607.9H337L337 607.8H338L338 607.5H339L339 606.7H340L340 607.8H341L341 607.7H342L342 607.3H343L343 608.1H344L344 608.1H345L345 608.3H346L346 608.6H347L347 608.1H348L348 607.5H349L349 608.1H350L350 608.1H351L351 607.7H352L352 608.0H353L353 606.4H354L354 606.7H355L355 607.9H356L356 606.3H357L357 606.2H358L358 608.0H359L359 607.9H360L360 607.9H361L361 607.5H362L362 606.1H363L363 607.0H364L364 607.7H365L365 608.1H366L366 608.0H367L367 607.7H368L368 606.1H369L369 608.0H370L370 607.7H371L371 608.0H372L372 608.3H373L373 607.7H374L374 604.8H375L375 608.0H376L376 605.4H377L377 604.9H378L378 607.7H379L379 608.1H380L380 607.4H381L381 608.0H382L382 607.3H383L383 607.8H384L384 607.6H385L385 607.8H386L386 608.0H387L387 605.0H388L388 606.4H389L389 607.9H390L390 608.0H391L391 608.0H392L392 607.5H393L393 607.8H394L394 607.7H395L395 606.0H396L396 606.6H397L397 607.7H398L398 608.1H399L399 608.1H400L400 605.1H401L401 607.7H402L402 607.8H403L403 604.8H404L404 605.3H405L405 607.7H406L406 608.0H407L407 605.7H408L408 605.7H409L409 607.8H410L410 607.8H411L411 608.1H412L412 607.9H413L413 608.0H414L414 608.0H415L415 608.2H416L416 607.7H417L417 607.8H418L418 606.8H419L419 606.9H420L420 608.0H421L421 607.6H422L422 607.7H423L423 607.9H424L424 604.7H425L425 604.5H426L426 605.6H427L427 608.0H428L428 604.9H429L429 605.0H430L430 607.9H431L431 607.8H432L432 607.8H433L433 607.7H434L434 606.6H435L435 607.7H436L436 607.8H437L437 608.0H438L438 605.4H439L439 605.6H440L440 608.0H441L441 605.7H442L442 608.0H443L443 607.8H444L444 608.0H445L445 607.9H446L446 607.9H447L447 605.7H448L448 604.7H449L449 608.1H450L450 608.1H451L451 607.9H452L452 607.8H453L453 608.1H454L454 608.1H455L455 607.7H456L456 608.1H457L457 607.7H458L458 608.2H459L459 608.4H460L460 607.5H461L461 607.8H462L462 605.8H463L463 608.2H464L464 608.0H465L465 607.9H466L466 606.8H467L467 607.7H468L468 607.8H469L469 607.5H470L470 607.6H471L471 608.1H472L472 608.1H473L473 605.7H474L474 608.2H475L475 607.7H476L476 608.1H477L477 607.6H478L478 607.7H479L479 608.3H480L480 607.9H481L481 607.6H482L482 615.8H481L481 615.8H480L480 613.8H479L479 614.1H478L478 612.9H477L477 614.6H476L476 615.0H475L475 612.7H474L474 612.6H473L473 615.5H472L472 615.6H471L471 612.4H470L470 611.9H469L469 614.3H468L468 615.2H467L467 612.5H466L466 612.7H465L465 612.3H464L464 612.3H463L463 612.4H462L462 612.5H461L461 615.0H460L460 614.0H459L459 614.0H458L458 614.2H457L457 612.7H456L456 615.3H455L455 612.5H454L454 613.0H453L453 612.7H452L452 612.4H451L451 612.7H450L450 612.7H449L449 612.9H448L448 613.1H447L447 613.0H446L446 612.7H445L445 612.6H444L444 612.7H443L443 612.9H442L442 612.7H441L441 612.5H440L440 612.7H439L439 612.4H438L438 612.7H437L437 612.7H436L436 615.5H435L435 612.5H434L434 613.0H433L433 615.9H432L432 612.5H431L431 612.5H430L430 612.9H429L429 612.5H428L428 612.5H427L427 612.5H426L426 612.4H425L425 612.8H424L424 613.0H423L423 612.6H422L422 613.3H421L421 612.7H420L420 612.5H419L419 612.9H418L418 615.3H417L417 615.5H416L416 612.7H415L415 612.7H414L414 612.8H413L413 613.1H412L412 612.4H411L411 614.1H410L410 612.4H409L409 612.5H408L408 612.6H407L407 612.3H406L406 612.5H405L405 612.7H404L404 612.7H403L403 612.8H402L402 612.5H401L401 612.7H400L400 612.7H399L399 613.1H398L398 612.5H397L397 612.5H396L396 612.7H395L395 612.7H394L394 612.7H393L393 613.7H392L392 614.6H391L391 614.8H390L390 612.7H389L389 612.7H388L388 612.4H387L387 612.6H386L386 616.1H385L385 612.3H384L384 613.3H383L383 613.4H382L382 612.5H381L381 612.4H380L380 612.4H379L379 613.4H378L378 612.5H377L377 612.7H376L376 612.9H375L375 612.5H374L374 612.5H373L373 613.9H372L372 613.9H371L371 612.7H370L370 612.9H369L369 612.8H368L368 612.4H367L367 612.6H366L366 612.5H365L365 616.3H364L364 612.8H363L363 612.5H362L362 612.6H361L361 612.4H360L360 612.8H359L359 613.2H358L358 612.8H357L357 612.4H356L356 612.4H355L355 612.9H354L354 612.8H353L353 615.1H352L352 612.3H351L351 612.9H350L350 612.5H349L349 612.6H348L348 615.3H347L347 612.7H346L346 612.9H345L345 612.8H344L344 613.8H343L343 612.7H342L342 614.2H341L341 614.4H340L340 612.9H339L339 612.5H338L338 612.4H337L337 612.6H336L336 612.5H335L335 612.6H334L334 612.4H333L333 612.6H332L332 613.8H331L331 614.4H330L330 612.8H329L329 612.8H328L328 612.7H327L327 612.3H326L326 615.7H325L325 613.0H324L324 613.1H323L323 612.6H322L322 615.6H321L321 612.7H320L320 612.9H319L319 614.3H318L318 613.4H317L317 613.2H316L316 612.6H315L315 613.3H314L314 612.8H313L313 613.3H312L312 612.7H311L311 612.8H310L310 612.6H309L309 612.6H308L308 613.2H307L307 615.3H306L306 614.7H305L305 612.5H304L304 612.4H303L303 612.7H302L302 612.9H301L301 613.0H300L300 616.4H299L299 612.6H298L298 613.1H297L297 612.8H296L296 612.7H295L295 612.3H294L294 612.8H293L293 612.6H292L292 613.0H291L291 612.8H290L290 612.7H289L289 612.7H288L288 612.4H287L287 612.6H286L286 612.7H285L285 614.4H284L284 612.7H283L283 612.9H282L282 612.5H281L281 612.8H280L280 612.5H279L279 612.7H278L278 612.6H277L277 612.7H276L276 612.5H275L275 612.7H274L274 612.7H273L273 612.8H272L272 612.7H271L271 613.0H270L270 612.3H269L269 612.6H268L268 612.6H267L267 614.1H266L266 614.8H265L265 612.9H264L264 613.9H263L263 614.3H262L262 612.5H261L261 612.8H260L260 612.8H259L259 612.8H258L258 612.9H257L257 614.2H256L256 612.9H255L255 612.4H254L254 613.2H253L253 612.6H252L252 613.1H251L251 612.6H250L250 612.9H249L249 612.7H248L248 613.1H247L247 614.0H246L246 613.2H245L245 612.8H244L244 612.1H243L243 612.5H242L242 613.1H241L241 612.5H240L240 612.5H239L239 612.4H238L238 612.7H237L237 612.1H236L236 612.2H235L235 612.5H234L234 612.3H233L233 612.6H232L232 613.2H231L231 613.2H230L230 612.4H229L229 612.9H228L228 612.6H227L227 612.8H226L226 612.9H225L225 612.8H224L224 612.4H223L223 612.5H222L222 612.6H221L221 615.3H220L220 612.3H219L219 612.5H218L218 612.3H217L217 615.3H216L216 613.0H215L215 612.6H214L214 613.1H213L213 612.9H212L212 615.2H211L211 612.9H210L210 613.0H209L209 614.9H208L208 615.4H207L207 612.4H206L206 613.0H205L205 612.9H204L204 612.5H203L203 612.6H202L202 612.6H201L201 612.2H200L200 612.7H199L199 614.5H198L198 615.2H197L197 612.2H196L196 615.7H195L195 612.9H194L194 613.0H193L193 612.3H192L192 614.7H191L191 612.7H190L190 612.5H189L189 612.7H188L188 612.8H187L187 612.7H186L186 613.1H185L185 613.7H184L184 615.1H183L183 612.7H182L182 612.3H181L181 612.8H180L180 613.0H179L179 612.6H178L178 614.8H177L177 612.7H176L176 612.6H175L175 613.0H174L174 613.0H173L173 613.2H172L172 612.3H171L171 612.7H170L170 613.0H169L169 612.5H168L168 612.8H167L167 614.4H166L166 614.1H165L165 613.6H164L164 613.6H163L163 612.8H162L162 615.0H161L161 615.4H160L160 612.5H159L159 612.7H158L158 612.9H157L157 612.4H156L156 612.7H155L155 612.5H154L154 613.0H153L153 613.3H152L152 612.7H151L151 612.6H150L150 613.0H149L149 612.6H148L148 612.6H147L147 612.5H146L146 613.2H145L145 614.7H144L144 615.3H143L143 612.7H142L142 612.5H141L141 614.4H140L140 614.8H139L139 612.7H138L138 612.7H137L137 612.8H136L136 612.8H135L135 614.8H134L134 615.2H133L133 612.7H132L132 615.0H131L131 612.6H130L130 613.7H129L129 614.4H128L128 612.4H127L127 612.9H126L126 612.6H125L125 612.8H124L124 612.5H123L123 614.8H122L122 612.7H121L121 612.4H120L120 613.0H119L119 612.7H118L118 613.2H117L117 614.3H116L116 612.4H115L115 612.7H114L114 612.6H113L113 612.5H112L112 612.8H111L111 612.9H110L110 612.0H109L109 612.4H108L108 614.6H107L107 614.6H106L106 612.6H105L105 612.6H104L104 612.6H103L103 612.6H102L102 612.7H101L101 612.9H100L100 612.6H99L99 612.6H98L98 612.5H97L97 615.4H96L96 616.0H95L95 612.5H94L94 612.5H93L93 614.0H92L92 612.6H91L91 615.1H90L90 612.7H89L89 614.8H88L88 612.6H87L87 614.8H86L86 614.4H85L85 612.8H84L84 614.9H83L83 612.9H82L82 612.5H81L81 615.8H80L80 613.0H79L79 612.8H78L78 612.4H77L77 614.3H76L76 614.2H75L75 613.4H74L74 612.8H73L73 613.0H72L72 613.0H71L71 612.5H70L70 615.3H69L69 614.7H68L68 612.5H67L67 612.8H66L66 612.7H65L65 612.5H64L64 612.5H63L63 615.0H62L62 615.3H61L61 612.8H60L60 612.5H59L59 612.6H58L58 612.5H57L57 613.8H56L56 612.5H55L55 612.7H54L54 612.5H53L53 612.7H52L52 614.6H51L51 614.9H50L50 612.7H49L49 612.7H48L48 612.7H47L47 612.9H46L46 612.9H45L45 612.6H44L44 613.6H43L43 613.1H42L42 613.1H41L41 612.6H40L40 612.7H39L39 612.6H38L38 612.5H37L37 612.5H36L36 612.7H35L35 612.8H34L34 613.0H33L33 612.8H32L32 612.6H31L31 612.6H30L30 612.3H29L29 612.4H28L28 612.5H27L27 612.7H26L26 612.5H25L25 612.6H24L24 613.9H23L23 614.0H22L22 614.3H21ZM483 506.2H484L484 508.6H485L485 508.5H486L486 509.1H487L487 508.6H488L488 508.4H489L489 506.5H490L490 506.8H491L491 505.7H492L492 505.7H493L493 508.8H494L494 508.7H495L495 508.5H496L496 508.9H497L497 508.6H498L498 509.0H499L499 509.0H500L500 508.9H501L501 509.0H502L502 508.6H503L503 506.0H504L504 506.4H505L505 506.5H506L506 508.4H507L507 508.6H508L508 508.9H509L509 508.7H510L510 507.0H511L511 507.5H512L512 506.1H513L513 506.3H514L514 508.7H515L515 508.9H516L516 508.7H517L517 508.8H518L518 505.9H519L519 508.3H520L520 509.2H521L521 508.6H522L522 509.0H523L523 508.8H524L524 509.1H525L525 508.7H526L526 509.1H527L527 508.9H528L528 508.6H529L529 505.9H530L530 506.4H531L531 506.4H532L532 508.9H533L533 508.6H534L534 508.8H535L535 508.7H536L536 508.6H537L537 520.7H536L536 513.8H535L535 515.7H534L534 515.8H533L533 514.0H532L532 513.6H531L531 513.1H530L530 514.1H529L529 513.7H528L528 516.6H527L527 513.3H526L526 513.6H525L525 513.5H524L524 513.4H523L523 514.7H522L522 513.8H521L521 513.5H520L520 513.0H519L519 513.6H518L518 513.7H517L517 515.2H516L516 515.2H515L515 513.5H514L514 513.2H513L513 513.4H512L512 514.0H511L511 513.3H510L510 515.1H509L509 515.5H508L508 514.1H507L507 513.3H506L506 513.6H505L505 513.4H504L504 513.0H503L503 513.2H502L502 514.9H501L501 513.5H500L500 515.4H499L499 514.8H498L498 513.3H497L497 513.3H496L496 513.4H495L495 513.9H494L494 515.2H493L493 513.7H492L492 514.0H491L491 513.4H490L490 513.5H489L489 513.6H488L488 513.5H487L487 513.3H486L486 513.3H485L485 513.8H484L484 513.4H483ZM540 595.1H541L541 601.7H542L542 604.5H543L543 605.9H544L544 606.9H545L545 607.4H546L546 607.3H547L547 605.1H548L548 607.9H549L549 607.9H550L550 608.2H551L551 608.1H552L552 607.8H553L553 607.5H554L554 606.1H555L555 608.1H556L556 608.1H557L557 607.8H558L558 605.4H559L559 606.3H560L560 607.6H561L561 607.9H562L562 607.8H563L563 607.7H564L564 607.8H565L565 606.6H566L566 606.6H567L567 607.8H568L568 608.3H569L569 607.5H570L570 608.0H571L571 607.7H572L572 608.0H573L573 607.7H574L574 606.7H575L575 608.0H576L576 607.9H577L577 605.2H578L578 608.2H579L579 608.2H580L580 608.0H581L581 607.8H582L582 607.9H583L583 608.0H584L584 608.1H585L585 604.5H586L586 604.7H587L587 607.8H588L588 607.8H589L589 608.0H590L590 607.9H591L591 608.1H592L592 607.8H593L593 607.8H594L594 607.8H595L595 608.2H596L596 608.1H597L597 605.6H598L598 604.8H599L599 607.8H600L600 607.6H601L601 607.9H602L602 607.9H603L603 608.0H604L604 605.2H605L605 606.0H606L606 607.9H607L607 607.5H608L608 607.9H609L609 608.2H610L610 607.7H611L611 608.1H612L612 608.0H613L613 607.9H614L614 607.8H615L615 606.3H616L616 605.6H617L617 606.0H618L618 608.3H619L619 608.3H620L620 605.9H621L621 607.8H622L622 607.6H623L623 607.7H624L624 605.6H625L625 608.3H626L626 608.2H627L627 608.1H628L628 604.9H629L629 605.6H630L630 605.5H631L631 608.1H632L632 606.0H633L633 607.9H634L634 608.1H635L635 604.9H636L636 606.2H637L637 605.4H638L638 607.8H639L639 608.1H640L640 608.0H641L641 607.9H642L642 606.1H643L643 607.8H644L644 607.9H645L645 608.0H646L646 605.9H647L647 605.9H648L648 607.8H649L649 607.9H650L650 607.4H651L651 607.9H652L652 607.6H653L653 608.1H654L654 607.8H655L655 607.9H656L656 607.7H657L657 607.8H658L658 606.7H659L659 608.1H660L660 607.7H661L661 607.6H662L662 608.1H663L663 608.0H664L664 607.8H665L665 607.5H666L666 607.7H667L667 608.2H668L668 607.9H669L669 608.2H670L670 608.0H671L671 607.6H672L672 607.4H673L673 607.5H674L674 607.8H675L675 607.6H676L676 606.6H677L677 606.9H678L678 607.6H679L679 608.0H680L680 608.2H681L681 607.6H682L682 607.9H683L683 607.8H684L684 607.9H685L685 607.6H686L686 608.2H687L687 608.1H688L688 608.0H689L689 608.2H690L690 605.5H691L691 608.1H692L692 607.7H693L693 607.8H694L694 607.6H695L695 605.2H696L696 608.0H697L697 607.5H698L698 607.8H699L699 608.1H700L700 606.5H701L701 608.0H702L702 604.7H703L703 605.0H704L704 608.1H705L705 605.6H706L706 606.0H707L707 607.8H708L708 607.9H709L709 608.0H710L710 607.8H711L711 607.9H712L712 607.8H713L713 606.1H714L714 605.8H715L715 607.5H716L716 607.9H717L717 607.3H718L718 608.2H719L719 608.0H720L720 608.0H721L721 607.9H722L722 608.2H723L723 608.1H724L724 608.2H725L725 608.1H726L726 608.1H727L727 607.8H728L728 608.1H729L729 604.8H730L730 604.9H731L731 605.4H732L732 607.7H733L733 606.4H734L734 608.3H735L735 608.7H736L736 608.0H737L737 605.3H738L738 605.7H739L739 608.0H740L740 608.0H741L741 607.9H742L742 607.7H743L743 607.8H744L744 607.6H745L745 607.5H746L746 607.8H747L747 607.9H748L748 606.2H749L749 608.2H750L750 608.0H751L751 608.0H752L752 605.9H753L753 606.6H754L754 608.3H755L755 608.0H756L756 608.1H757L757 605.4H758L758 608.1H759L759 607.5H760L760 607.6H761L761 605.7H762L762 605.8H763L763 608.1H764L764 607.6H765L765 607.9H766L766 608.1H767L767 607.7H768L768 607.8H769L769 607.3H770L770 608.0H771L771 608.2H772L772 608.0H773L773 604.6H774L774 605.1H775L775 605.3H776L776 608.3H777L777 608.4H778L778 608.0H779L779 607.7H780L780 606.4H781L781 606.7H782L782 608.0H783L783 608.0H784L784 607.6H785L785 608.0H786L786 608.1H787L787 606.4H788L788 606.5H789L789 608.1H790L790 606.6H791L791 606.2H792L792 607.9H793L793 607.5H794L794 607.7H795L795 608.0H796L796 606.1H797L797 608.2H798L798 606.8H799L799 607.7H800L800 605.8H801L801 608.1H802L802 607.9H803L803 608.1H804L804 607.9H805L805 608.0H806L806 606.0H807L807 606.6H808L808 607.4H809L809 607.9H810L810 607.8H811L811 607.8H812L812 608.3H813L813 607.9H814L814 607.8H815L815 607.5H816L816 607.7H817L817 607.5H818L818 605.2H819L819 608.2H820L820 608.1H821L821 608.1H822L822 607.6H823L823 607.6H824L824 606.0H825L825 608.2H826L826 607.8H827L827 607.5H828L828 607.7H829L829 607.7H830L830 607.8H831L831 608.1H832L832 607.8H833L833 606.8H834L834 607.9H835L835 607.9H836L836 608.0H837L837 607.9H838L838 608.2H839L839 607.8H840L840 607.7H841L841 605.3H842L842 607.7H843L843 607.7H844L844 605.5H845L845 607.7H846L846 607.7H847L847 607.1H848L848 608.1H849L849 606.8H850L850 607.3H851L851 608.2H852L852 608.0H853L853 607.1H854L854 608.0H855L855 608.1H856L856 605.5H857L857 605.4H858L858 607.8H859L859 607.8H860L860 607.6H861L861 608.2H862L862 607.7H863L863 607.7H864L864 607.4H865L865 608.4H866L866 606.3H867L867 608.0H868L868 608.1H869L869 608.1H870L870 607.7H871L871 607.7H872L872 607.8H873L873 606.4H874L874 608.1H875L875 607.8H876L876 608.1H877L877 607.7H878L878 607.0H879L879 607.6H880L880 608.1H881L881 608.0H882L882 607.2H883L883 608.1H884L884 606.4H885L885 607.8H886L886 608.0H887L887 608.1H888L888 608.0H889L889 607.8H890L890 606.6H891L891 606.7H892L892 608.2H893L893 607.6H894L894 607.7H895L895 607.9H896L896 608.0H897L897 607.8H898L898 608.3H899L899 608.0H900L900 608.4H901L901 608.0H902L902 608.1H903L903 606.0H904L904 608.2H905L905 607.4H906L906 608.1H907L907 606.2H908L908 607.8H909L909 607.9H910L910 605.7H911L911 608.3H912L912 608.0H913L913 608.2H914L914 607.7H915L915 608.0H916L916 607.8H917L917 607.9H918L918 608.4H919L919 607.9H920L920 607.9H921L921 607.8H922L922 607.7H923L923 607.9H924L924 607.3H925L925 606.5H926L926 608.1H927L927 605.1H928L928 607.8H929L929 608.1H930L930 608.2H931L931 607.5H932L932 607.5H933L933 607.7H934L934 608.0H935L935 607.9H936L936 605.6H937L937 608.0H938L938 608.3H939L939 607.8H940L940 604.9H941L941 605.9H942L942 607.7H943L943 608.0H944L944 605.4H945L945 604.6H946L946 607.9H947L947 607.8H948L948 608.0H949L949 607.7H950L950 608.0H951L951 607.8H952L952 608.1H953L953 608.4H954L954 608.2H955L955 606.3H956L956 607.6H957L957 607.5H958L958 606.2H959L959 607.7H960L960 608.1H961L961 608.2H962L962 607.4H963L963 606.2H964L964 605.2H965L965 608.1H966L966 608.1H967L967 607.8H968L968 608.1H969L969 608.4H970L970 607.9H971L971 607.6H972L972 607.9H973L973 608.3H974L974 608.0H975L975 608.0H976L976 608.0H977L977 607.7H978L978 608.1H979L979 608.1H980L980 608.4H981L981 604.6H982L982 607.8H983L983 605.5H984L984 608.3H985L985 607.8H986L986 607.8H987L987 607.5H988L988 605.0H989L989 606.1H990L990 608.0H991L991 604.4H992L992 606.5H993L993 605.0H994L994 604.8H995L995 605.9H996L996 606.9H997L997 606.4H998L998 607.9H999L999 607.9H1000L1000 607.8H1001L1001 604.7H1002L1002 608.1H1003L1003 607.6H1004L1004 607.6H1005L1005 606.6H1006L1006 608.4H1007L1007 608.0H1008L1008 608.1H1009L1009 608.0H1010L1010 606.5H1011L1011 606.5H1012L1012 608.0H1013L1013 607.7H1014L1014 607.8H1015L1015 607.4H1016L1016 607.5H1017L1017 605.4H1018L1018 608.3H1019L1019 605.2H1020L1020 606.3H1021L1021 608.2H1022L1022 612.6H1021L1021 612.9H1020L1020 612.8H1019L1019 612.8H1018L1018 612.9H1017L1017 612.6H1016L1016 612.4H1015L1015 613.2H1014L1014 615.2H1013L1013 614.0H1012L1012 612.7H1011L1011 612.5H1010L1010 612.4H1009L1009 614.9H1008L1008 612.9H1007L1007 612.7H1006L1006 612.7H1005L1005 612.5H1004L1004 616.0H1003L1003 612.6H1002L1002 612.7H1001L1001 612.8H1000L1000 612.8H999L999 613.0H998L998 612.2H997L997 612.5H996L996 612.7H995L995 612.4H994L994 613.0H993L993 612.9H992L992 613.0H991L991 612.9H990L990 612.8H989L989 612.5H988L988 612.7H987L987 612.7H986L986 614.3H985L985 613.6H984L984 612.4H983L983 612.6H982L982 612.5H981L981 613.0H980L980 612.6H979L979 614.1H978L978 612.3H977L977 612.8H976L976 612.7H975L975 612.3H974L974 613.0H973L973 612.5H972L972 612.7H971L971 613.6H970L970 615.4H969L969 612.7H968L968 612.6H967L967 612.6H966L966 613.3H965L965 612.4H964L964 612.1H963L963 612.3H962L962 612.4H961L961 612.4H960L960 612.2H959L959 612.6H958L958 612.4H957L957 612.5H956L956 612.4H955L955 612.4H954L954 612.6H953L953 615.3H952L952 612.7H951L951 612.4H950L950 612.6H949L949 613.3H948L948 615.0H947L947 613.3H946L946 612.8H945L945 612.8H944L944 612.7H943L943 612.7H942L942 612.7H941L941 612.8H940L940 612.4H939L939 615.0H938L938 612.9H937L937 612.7H936L936 614.1H935L935 612.7H934L934 614.2H933L933 612.6H932L932 612.7H931L931 612.8H930L930 613.1H929L929 612.5H928L928 613.6H927L927 612.3H926L926 612.7H925L925 612.4H924L924 614.7H923L923 615.8H922L922 612.7H921L921 612.9H920L920 612.5H919L919 612.5H918L918 613.6H917L917 613.0H916L916 613.8H915L915 612.8H914L914 612.9H913L913 612.7H912L912 612.9H911L911 612.9H910L910 612.7H909L909 612.4H908L908 613.1H907L907 613.5H906L906 612.5H905L905 612.7H904L904 612.3H903L903 614.9H902L902 615.2H901L901 615.0H900L900 613.2H899L899 612.8H898L898 612.6H897L897 612.3H896L896 612.9H895L895 612.9H894L894 612.6H893L893 612.6H892L892 612.7H891L891 612.7H890L890 615.2H889L889 615.1H888L888 612.6H887L887 612.7H886L886 615.3H885L885 612.6H884L884 615.2H883L883 615.0H882L882 612.7H881L881 614.5H880L880 612.6H879L879 612.5H878L878 615.6H877L877 612.6H876L876 615.0H875L875 612.7H874L874 612.9H873L873 615.4H872L872 612.5H871L871 612.7H870L870 612.7H869L869 612.8H868L868 612.8H867L867 612.4H866L866 613.8H865L865 613.3H864L864 614.4H863L863 615.5H862L862 612.9H861L861 612.7H860L860 612.3H859L859 612.9H858L858 612.1H857L857 612.5H856L856 612.6H855L855 612.7H854L854 612.7H853L853 615.0H852L852 612.9H851L851 612.8H850L850 612.9H849L849 612.9H848L848 613.2H847L847 614.1H846L846 614.7H845L845 612.9H844L844 612.4H843L843 612.6H842L842 613.0H841L841 614.5H840L840 615.3H839L839 612.5H838L838 616.4H837L837 612.9H836L836 612.7H835L835 612.6H834L834 612.7H833L833 612.7H832L832 615.1H831L831 612.8H830L830 612.6H829L829 612.4H828L828 612.4H827L827 612.8H826L826 612.5H825L825 613.2H824L824 612.4H823L823 612.6H822L822 615.1H821L821 614.7H820L820 613.0H819L819 612.6H818L818 612.7H817L817 612.8H816L816 613.0H815L815 612.7H814L814 612.4H813L813 613.2H812L812 612.7H811L811 612.5H810L810 612.7H809L809 612.7H808L808 612.9H807L807 612.8H806L806 612.6H805L805 614.5H804L804 612.4H803L803 613.2H802L802 612.8H801L801 612.3H800L800 612.8H799L799 612.4H798L798 612.5H797L797 612.7H796L796 615.1H795L795 616.5H794L794 615.0H793L793 612.8H792L792 612.4H791L791 612.9H790L790 612.8H789L789 613.1H788L788 613.3H787L787 612.5H786L786 612.7H785L785 613.7H784L784 613.6H783L783 616.0H782L782 612.6H781L781 612.6H780L780 612.7H779L779 614.9H778L778 612.6H777L777 614.5H776L776 612.4H775L775 612.2H774L774 612.6H773L773 612.2H772L772 613.0H771L771 615.2H770L770 612.8H769L769 612.4H768L768 612.8H767L767 612.6H766L766 612.9H765L765 612.5H764L764 612.7H763L763 612.6H762L762 612.6H761L761 612.7H760L760 613.0H759L759 612.5H758L758 612.7H757L757 613.0H756L756 612.7H755L755 612.6H754L754 612.5H753L753 612.6H752L752 612.4H751L751 612.6H750L750 614.8H749L749 612.4H748L748 615.3H747L747 617.1H746L746 612.9H745L745 612.8H744L744 612.9H743L743 612.9H742L742 612.7H741L741 612.4H740L740 613.1H739L739 612.4H738L738 612.4H737L737 615.1H736L736 612.9H735L735 615.6H734L734 612.6H733L733 612.7H732L732 612.3H731L731 613.2H730L730 612.4H729L729 612.2H728L728 612.8H727L727 612.9H726L726 612.3H725L725 612.7H724L724 612.8H723L723 615.8H722L722 612.7H721L721 612.7H720L720 614.3H719L719 613.5H718L718 612.8H717L717 612.6H716L716 612.8H715L715 612.4H714L714 612.6H713L713 615.5H712L712 615.4H711L711 612.2H710L710 614.7H709L709 612.5H708L708 612.7H707L707 612.8H706L706 612.7H705L705 612.5H704L704 612.4H703L703 612.8H702L702 615.6H701L701 612.9H700L700 612.9H699L699 612.6H698L698 612.4H697L697 612.3H696L696 612.8H695L695 612.7H694L694 612.8H693L693 612.8H692L692 613.2H691L691 612.3H690L690 612.6H689L689 612.2H688L688 614.6H687L687 614.2H686L686 612.9H685L685 614.2H684L684 615.0H683L683 615.4H682L682 612.8H681L681 612.4H680L680 612.6H679L679 612.4H678L678 613.0H677L677 612.4H676L676 612.6H675L675 612.6H674L674 612.3H673L673 615.8H672L672 615.7H671L671 613.0H670L670 612.3H669L669 612.4H668L668 615.5H667L667 616.1H666L666 612.5H665L665 612.5H664L664 612.8H663L663 614.2H662L662 613.9H661L661 612.4H660L660 612.7H659L659 612.6H658L658 612.8H657L657 612.7H656L656 612.3H655L655 612.9H654L654 613.0H653L653 612.9H652L652 613.3H651L651 612.6H650L650 612.5H649L649 612.4H648L648 612.5H647L647 612.8H646L646 612.6H645L645 614.7H644L644 613.3H643L643 613.2H642L642 613.0H641L641 612.1H640L640 612.6H639L639 612.9H638L638 612.6H637L637 612.4H636L636 612.9H635L635 612.2H634L634 615.5H633L633 612.5H632L632 612.5H631L631 612.7H630L630 612.4H629L629 612.4H628L628 612.4H627L627 612.8H626L626 612.9H625L625 612.6H624L624 612.6H623L623 613.2H622L622 615.8H621L621 612.6H620L620 612.6H619L619 613.9H618L618 612.6H617L617 612.7H616L616 612.5H615L615 615.4H614L614 614.2H613L613 612.7H612L612 615.0H611L611 612.9H610L610 612.5H609L609 615.4H608L608 612.0H607L607 612.7H606L606 612.3H605L605 612.8H604L604 612.6H603L603 612.5H602L602 612.7H601L601 612.6H600L600 612.7H599L599 612.6H598L598 612.8H597L597 612.5H596L596 614.2H595L595 615.4H594L594 612.4H593L593 612.4H592L592 612.5H591L591 612.5H590L590 612.7H589L589 612.7H588L588 612.5H587L587 612.4H586L586 612.5H585L585 612.7H584L584 614.1H583L583 614.8H582L582 614.6H581L581 615.5H580L580 612.8H579L579 612.7H578L578 612.7H577L577 612.4H576L576 612.7H575L575 612.3H574L574 615.0H573L573 612.7H572L572 612.4H571L571 612.5H570L570 612.9H569L569 614.3H568L568 612.9H567L567 612.6H566L566 612.6H565L565 612.5H564L564 612.7H563L563 612.9H562L562 612.9H561L561 613.1H560L560 612.6H559L559 612.1H558L558 612.6H557L557 612.4H556L556 612.5H555L555 612.5H554L554 612.5H553L553 612.2H552L552 613.5H551L551 613.7H550L550 615.6H549L549 612.5H548L548 612.5H547L547 614.6H546L546 614.0H545L545 611.6H544L544 611.3H543L543 610.6H542L542 608.0H541L541 605.2H540Z" fill="#00ff00"/>
<g style="mix-blend-mode:screen">
<path d="M120.5 30.5h1.9M120.5 43.5h1.9M120.5 56.5h1.9M120.5 69.5h1.9M120.5 82.5h1.9M120.5 95.5h1.9M120.5 108.5h1.9M120.5 121.5h1.9M120.5 134.5h1.9M120.5 147.5h1.9M120.5 160.5h1.9M120.5 173.5h1.9M120.5 186.5h1.9M120.5 199.5h1.9M120.5 212.5h1.9M120.5 225.5h1.9M120.5 238.5h1.9M120.5 251.5h1.9M120.5 264.5h1.9M120.5 277.5h1.9M120.5 290.5h1.9M120.5 303.5h1.9M120.5 316.5h1.9M120.5 329.5h1.9M120.5 342.5h1.9M120.5 355.5h1.9M120.5 368.5h1.9M120.5 381.5h1.9M120.5 394.5h1.9M120.5 407.5h1.9M120.5 420.5h1.9M120.5 433.5h1.9M120.5 446.5h1.9M120.5 459.5h1.9M120.5 472.5h1.9M120.5 485.5h1.9M120.5 498.5h1.9M120.5 511.5h1.9M120.5 524.5h1.9M120.5 537.5h1.9M120.5 550.5h1.9M120.5 563.5h1.9M120.5 576.5h1.9M120.5 589.5h1.9M120.5 602.5h1.9M120.5 615.5h1.9M120.5 628.5h1.9M120.5 641.5h1.9M120.5 654.5h1.9M220.6 30.5h1.9M220.6 43.5h1.9M220.6 56.5h1.9M220.6 69.5h1.9M220.6 82.5h1.9M220.6 95.5h1.9M220.6 108.5h1.9M220.6 121.5h1.9M220.6 134.5h1.9M220.6 147.5h1.9M220.6 160.5h1.9M220.6 173.5h1.9M220.6 186.5h1.9M220.6 199.5h1.9M220.6 212.5h1.9M220.6 225.5h1.9M220.6 238.5h1.9M220.6 251.5h1.9M220.6 264.5h1.9M220.6 277.5h1.9M220.6 290.5h1.9M220.6 303.5h1.9M220.6 316.5h1.9M220.6 329.5h1.9M220.6 342.5h1.9M220.6 355.5h1.9M220.6 368.5h1.9M220.6 381.5h1.9M220.6 394.5h1.9M220.6 407.5h1.9M220.6 420.5h1.9M220.6 433.5h1.9M220.6 446.5h1.9M220.6 459.5h1.9M220.6 472.5h1.9M220.6 485.5h1.9M220.6 498.5h1.9M220.6 511.5h1.9M220.6 524.5h1.9M220.6 537.5h1.9M220.6 550.5h1.9M220.6 563.5h1.9M220.6 576.5h1.9M220.6 589.5h1.9M220.6 602.5h1.9M220.6 615.5h1.9M220.6 628.5h1.9M220.6 641.5h1.9M220.6 654.5h1.9M320.6 30.5h1.9M320.6 43.5h1.9M320.6 56.5h1.9M320.6 69.5h1.9M320.6 82.5h1.9M320.6 95.5h1.9M320.6 108.5h1.9M320.6 121.5h1.9M320.6 134.5h1.9M320.6 147.5h1.9M320.6 160.5h1.9M320.6 173.5h1.9M320.6 186.5h1.9M320.6 199.5h1.9M320.6 212.5h1.9M320.6 225.5h1.9M320.6 238.5h1.9M320.6 251.5h1.9M320.6 264.5h1.9M320.6 277.5h1.9M320.6 290.5h1.9M320.6 303.5h1.9M320.6 316.5h1.9M320.6 329.5h1.9M320.6 342.5h1.9M320.6 355.5h1.9M320.6 368.5h1.9M320.6 381.5h1.9M320.6 394.5h1.9M320.6 407.5h1.9M320.6 420.5h1.9M320.6 433.5h1.9M320.6 446.5h1.9M320.6 459.5h1.9M320.6 472.5h1.9M320.6 485.5h1.9M320.6 498.5h1.9M320.6 511.5h1.9M320.6 524.5h1.9M320.6 537.5h1.9M320.6 550.5h1.9M320.6 563.5h1.9M320.6 576.5h1.9M320.6 589.5h1.9M320.6 602.5h1.9M320.6 615.5h1.9M320.6 628.5h1.9M320.6 641.5h1.9M320.6 654.5h1.9M420.6 30.5h1.9M420.6 43.5h1.9M420.6 56.5h1.9M420.6 69.5h1.9M420.6 82.5h1.9M420.6 95.5h1.9M420.6 108.5h1.9M420.6 121.5h1.9M420.6 134.5h1.9M420.6 147.5h1.9M420.6 160.5h1.9M420.6 173.5h1.9M420.6 186.5h1.9M420.6 199.5h1.9M420.6 212.5h1.9M420.6 225.5h1.9M420.6 238.5h1.9M420.6 251.5h1.9M420.6 264.5h1.9M420.6 277.5h1.9M420.6 290.5h1.9M420.6 303.5h1.9M420.6 316.5h1.9M420.6 329.5h1.9M420.6 342.5h1.9M420.6 355.5h1.9M420.6 368.5h1.9M420.6 381.5h1.9M420.6 394.5h1.9M420.6 407.5h1.9M420.6 420.5h1.9M420.6 433.5h1.9M420.6 446.5h1.9M420.6 459.5h1.9M420.6 472.5h1.9M420.6 485.5h1.9M420.6 498.5h1.9M420.6 511.5h1.9M420.6 524.5h1.9M420.6 537.5h1.9M420.6 550.5h1.9M420.6 563.5h1.9M420.6 576.5h1.9M420.6 589.5h1.9M420.6 602.5h1.9M420.6 615.5h1.9M420.6 628.5h1.9M420.6 641.5h1.9M420.6 654.5h1.9M620.5 30.5h1.9M620.5 43.5h1.9M620.5 56.5h1.9M620.5 69.5h1.9M620.5 82.5h1.9M620.5 95.5h1.9M620.5 108.5h1.9M620.5 121.5h1.9M620.5 134.5h1.9M620.5 147.5h1.9M620.5 160.5h1.9M620.5 173.5h1.9M620.5 186.5h1.9M620.5 199.5h1.9M620.5 212.5h1.9M620.5 225.5h1.9M620.5 238.5h1.9M620.5 251.5h1.9M620.5 264.5h1.9M620.5 277.5h1.9M620.5 290.5h1.9M620.5 303.5h1.9M620.5 316.5h1.9M620.5 329.5h1.9M620.5 342.5h1.9M620.5 355.5h1.9M620.5 368.5h1.9M620.5 381.5h1.9M620.5 394.5h1.9M620.5 407.5h1.9M620.5 420.5h1.9M620.5 433.5h1.9M620.5 446.5h1.9M620.5 459.5h1.9M620.5 472.5h1.9M620.5 485.5h1.9M620.5 498.5h1.9M620.5 511.5h1.9M620.5 524.5h1.9M620.5 537.5h1.9M620.5 550.5h1.9M620.5 563.5h1.9M620.5 576.5h1.9M620.5 589.5h1.9M620.5 602.5h1.9M620.5 615.5h1.9M620.5 628.5h1.9M620.5 641.5h1.9M620.5 654.5h1.9M720.5 30.5h1.9M720.5 43.5h1.9M720.5 56.5h1.9M720.5 69.5h1.9M720.5 82.5h1.9M720.5 95.5h1.9M720.5 108.5h1.9M720.5 121.5h1.9M720.5 134.5h1.9M720.5 147.5h1.9M720.5 160.5h1.9M720.5 173.5h1.9M720.5 186.5h1.9M720.5 199.5h1.9M720.5 212.5h1.9M720.5 225.5h1.9M720.5 238.5h1.9M720.5 251.5h1.9M720.5 264.5h1.9M720.5 277.5h1.9M720.5 290.5h1.9M720.5 303.5h1.9M720.5 316.5h1.9M720.5 329.5h1.9M720.5 342.5h1.9M720.5 355.5h1.9M720.5 368.5h1.9M720.5 381.5h1.9M720.5 394.5h1.9M720.5 407.5h1.9M720.5 420.5h1.9M720.5 433.5h1.9M720.5 446.5h1.9M720.5 459.5h1.9M720.5 472.5h1.9M720.5 485.5h1.9M720.5 498.5h1.9M720.5 511.5h1.9M720.5 524.5h1.9M720.5 537.5h1.9M720.5 550.5h1.9M720.5 563.5h1.9M720.5 576.5h1.9M720.5 589.5h1.9M720.5 602.5h1.9M720.5 615.5h1.9M720.5 628.5h1.9M720.5 641.5h1.9M720.5 654.5h1.9M820.5 30.5h1.9M820.5 43.5h1.9M820.5 56.5h1.9M820.5 69.5h1.9M820.5 82.5h1.9M820.5 95.5h1.9M820.5 108.5h1.9M820.5 121.5h1.9M820.5 134.5h1.9M820.5 147.5h1.9M820.5 160.5h1.9M820.5 173.5h1.9M820.5 186.5h1.9M820.5 199.5h1.9M820.5 212.5h1.9M820.5 225.5h1.9M820.5 238.5h1.9M820.5 251.5h1.9M820.5 264.5h1.9M820.5 277.5h1.9M820.5 290.5h1.9M820.5 303.5h1.9M820.5 316.5h1.9M820.5 329.5h1.9M820.5 342.5h1.9M820.5 355.5h1.9M820.5 368.5h1.9M820.5 381.5h1.9M820.5 394.5h1.9M820.5 407.5h1.9M820.5 420.5h1.9M820.5 433.5h1.9M820.5 446.5h1.9M820.5 459.5h1.9M820.5 472.5h1.9M820.5 485.5h1.9M820.5 498.5h1.9M820.5 511.5h1.9M820.5 524.5h1.9M820.5 537.5h1.9M820.5 550.5h1.9M820.5 563.5h1.9M820.5 576.5h1.9M820.5 589.5h1.9M820.5 602.5h1.9M820.5 615.5h1.9M820.5 628.5h1.9M820.5 641.5h1.9M820.5 654.5h1.9M920.5 30.5h1.9M920.5 43.5h1.9M920.5 56.5h1.9M920.5 69.5h1.9M920.5 82.5h1.9M920.5 95.5h1.9M920.5 108.5h1.9M920.5 121.5h1.9M920.5 134.5h1.9M920.5 147.5h1.9M920.5 160.5h1.9M920.5 173.5h1.9M920.5 186.5h1.9M920.5 199.5h1.9M920.5 212.5h1.9M920.5 225.5h1.9M920.5 238.5h1.9M920.5 251.5h1.9M920.5 264.5h1.9M920.5 277.5h1.9M920.5 290.5h1.9M920.5 303.5h1.9M920.5 316.5h1.9M920.5 329.5h1.9M920.5 342.5h1.9M920.5 355.5h1.9M920.5 368.5h1.9M920.5 381.5h1.9M920.5 394.5h1.9M920.5 407.5h1.9M920.5 420.5h1.9M920.5 433.5h1.9M920.5 446.5h1.9M920.5 459.5h1.9M920.5 472.5h1.9M920.5 485.5h1.9M920.5 498.5h1.9M920.5 511.5h1.9M920.5 524.5h1.9M920.5 537.5h1.9M920.5 550.5h1.9M920.5 563.5h1.9M920.5 576.5h1.9M920.5 589.5h1.9M920.5 602.5h1.9M920.5 615.5h1.9M920.5 628.5h1.9M920.5 641.5h1.9M920.5 654.5h1.9M40.5 82.5h1.9M60.5 82.5h1.9M80.5 82.5h1.9M100.5 82.5h1.9M140.6 82.5h1.9M160.6 82.5h1.9M180.6 82.5h1.9M200.6 82.5h1.9M240.6 82.5h1.9M260.6 82.5h1.9M280.6 82.5h1.9M300.6 82.5h1.9M340.6 82.5h1.9M360.6 82.5h1.9M380.6 82.5h1.9M400.6 82.5h1.9M440.6 82.5h1.9M460.6 82.5h1.9M480.6 82.5h1.9M500.6 82.5h1.9M540.5 82.5h1.9M560.5 82.5h1.9M580.5 82.5h1.9M600.5 82.5h1.9M640.5 82.5h1.9M660.5 82.5h1.9M680.5 82.5h1.9M700.5 82.5h1.9M740.5 82.5h1.9M760.5 82.5h1.9M780.5 82.5h1.9M800.5 82.5h1.9M840.5 82.5h1.9M860.5 82.5h1.9M880.5 82.5h1.9M900.5 82.5h1.9M940.5 82.5h1.9M960.5 82.5h1.9M980.5 82.5h1.9M1000.5 82.5h1.9M40.5 147.5h1.9M60.5 147.5h1.9M80.5 147.5h1.9M100.5 147.5h1.9M140.6 147.5h1.9M160.6 147.5h1.9M180.6 147.5h1.9M200.6 147.5h1.9M240.6 147.5h1.9M260.6 147.5h1.9M280.6 147.5h1.9M300.6 147.5h1.9M340.6 147.5h1.9M360.6 147.5h1.9M380.6 147.5h1.9M400.6 147.5h1.9M440.6 147.5h1.9M460.6 147.5h1.9M480.6 147.5h1.9M500.6 147.5h1.9M540.5 147.5h1.9M560.5 147.5h1.9M580.5 147.5h1.9M600.5 147.5h1.9M640.5 147.5h1.9M660.5 147.5h1.9M680.5 147.5h1.9M700.5 147.5h1.9M740.5 147.5h1.9M760.5 147.5h1.9M780.5 147.5h1.9M800.5 147.5h1.9M840.5 147.5h1.9M860.5 147.5h1.9M880.5 147.5h1.9M900.5 147.5h1.9M940.5 147.5h1.9M960.5 147.5h1.9M980.5 147.5h1.9M1000.5 147.5h1.9M40.5 212.5h1.9M60.5 212.5h1.9M80.5 212.5h1.9M100.5 212.5h1.9M140.6 212.5h1.9M160.6 212.5h1.9M180.6 212.5h1.9M200.6 212.5h1.9M240.6 212.5h1.9M260.6 212.5h1.9M280.6 212.5h1.9M300.6 212.5h1.9M340.6 212.5h1.9M360.6 212.5h1.9M380.6 212.5h1.9M400.6 212.5h1.9M440.6 212.5h1.9M460.6 212.5h1.9M480.6 212.5h1.9M500.6 212.5h1.9M540.5 212.5h1.9M560.5 212.5h1.9M580.5 212.5h1.9M600.5 212.5h1.9M640.5 212.5h1.9M660.5 212.5h1.9M680.5 212.5h1.9M700.5 212.5h1.9M740.5 212.5h1.9M760.5 212.5h1.9M780.5 212.5h1.9M800.5 212.5h1.9M840.5 212.5h1.9M860.5 212.5h1.9M880.5 212.5h1.9M900.5 212.5h1.9M940.5 212.5h1.9M960.5 212.5h1.9M980.5 212.5h1.9M1000.5 212.5h1.9M40.5 277.5h1.9M60.5 277.5h1.9M80.5 277.5h1.9M100.5 277.5h1.9M140.6 277.5h1.9M160.6 277.5h1.9M180.6 277.5h1.9M200.6 277.5h1.9M240.6 277.5h1.9M260.6 277.5h1.9M280.6 277.5h1.9M300.6 277.5h1.9M340.6 277.5h1.9M360.6 277.5h1.9M380.6 277.5h1.9M400.6 277.5h1.9M440.6 277.5h1.9M460.6 277.5h1.9M480.6 277.5h1.9M500.6 277.5h1.9M540.5 277.5h1.9M560.5 277.5h1.9M580.5 277.5h1.9M600.5 277.5h1.9M640.5 277.5h1.9M660.5 277.5h1.9M680.5 277.5h1.9M700.5 277.5h1.9M740.5 277.5h1.9M760.5 277.5h1.9M780.5 277.5h1.9M800.5 277.5h1.9M840.5 277.5h1.9M860.5 277.5h1.9M880.5 277.5h1.9M900.5 277.5h1.9M940.5 277.5h1.9M960.5 277.5h1.9M980.5 277.5h1.9M1000.5 277.5h1.9M40.5 407.5h1.9M60.5 407.5h1.9M80.5 407.5h1.9M100.5 407.5h1.9M140.6 407.5h1.9M160.6 407.5h1.9M180.6 407.5h1.9M200.6 407.5h1.9M240.6 407.5h1.9M260.6 407.5h1.9M280.6 407.5h1.9M300.6 407.5h1.9M340.6 407.5h1.9M360.6 407.5h1.9M380.6 407.5h1.9M400.6 407.5h1.9M440.6 407.5h1.9M460.6 407.5h1.9M480.6 407.5h1.9M500.6 407.5h1.9M540.5 407.5h1.9M560.5 407.5h1.9M580.5 407.5h1.9M600.5 407.5h1.9M640.5 407.5h1.9M660.5 407.5h1.9M680.5 407.5h1.9M700.5 407.5h1.9M740.5 407.5h1.9M760.5 407.5h1.9M780.5 407.5h1.9M800.5 407.5h1.9M840.5 407.5h1.9M860.5 407.5h1.9M880.5 407.5h1.9M900.5 407.5h1.9M940.5 407.5h1.9M960.5 407.5h1.9M980.5 407.5h1.9M1000.5 407.5h1.9M40.5 472.5h1.9M60.5 472.5h1.9M80.5 472.5h1.9M100.5 472.5h1.9M140.6 472.5h1.9M160.6 472.5h1.9M180.6 472.5h1.9M200.6 472.5h1.9M240.6 472.5h1.9M260.6 472.5h1.9M280.6 472.5h1.9M300.6 472.5h1.9M340.6 472.5h1.9M360.6 472.5h1.9M380.6 472.5h1.9M400.6 472.5h1.9M440.6 472.5h1.9M460.6 472.5h1.9M480.6 472.5h1.9M500.6 472.5h1.9M540.5 472.5h1.9M560.5 472.5h1.9M580.5 472.5h1.9M600.5 472.5h1.9M640.5 472.5h1.9M660.5 472.5h1.9M680.5 472.5h1.9M700.5 472.5h1.9M740.5 472.5h1.9M760.5 472.5h1.9M780.5 472.5h1.9M800.5 472.5h1.9M840.5 472.5h1.9M860.5 472.5h1.9M880.5 472.5h1.9M900.5 472.5h1.9M940.5 472.5h1.9M960.5 472.5h1.9M980.5 472.5h1.9M1000.5 472.5h1.9M40.5 537.5h1.9M60.5 537.5h1.9M80.5 537.5h1.9M100.5 537.5h1.9M140.6 537.5h1.9M160.6 537.5h1.9M180.6 537.5h1.9M200.6 537.5h1.9M240.6 537.5h1.9M260.6 537.5h1.9M280.6 537.5h1.9M300.6 537.5h1.9M340.6 537.5h1.9M360.6 537.5h1.9M380.6 537.5h1.9M400.6 537.5h1.9M440.6 537.5h1.9M460.6 537.5h1.9M480.6 537.5h1.9M500.6 537.5h1.9M540.5 537.5h1.9M560.5 537.5h1.9M580.5 537.5h1.9M600.5 537.5h1.9M640.5 537.5h1.9M660.5 537.5h1.9M680.5 537.5h1.9M700.5 537.5h1.9M740.5 537.5h1.9M760.5 537.5h1.9M780.5 537.5h1.9M800.5 537.5h1.9M840.5 537.5h1.9M860.5 537.5h1.9M880.5 537.5h1.9M900.5 537.5h1.9M940.5 537.5h1.9M960.5 537.5h1.9M980.5 537.5h1.9M1000.5 537.5h1.9M40.5 602.5h1.9M60.5 602.5h1.9M80.5 602.5h1.9M100.5 602.5h1.9M140.6 602.5h1.9M160.6 602.5h1.9M180.6 602.5h1.9M200.6 602.5h1.9M240.6 602.5h1.9M260.6 602.5h1.9M280.6 602.5h1.9M300.6 602.5h1.9M340.6 602.5h1.9M360.6 602.5h1.9M380.6 602.5h1.9M400.6 602.5h1.9M440.6 602.5h1.9M460.6 602.5h1.9M480.6 602.5h1.9M500.6 602.5h1.9M540.5 602.5h1.9M560.5 602.5h1.9M580.5 602.5h1.9M600.5 602.5h1.9M640.5 602.5h1.9M660.5 602.5h1.9M680.5 602.5h1.9M700.5 602.5h1.9M740.5 602.5h1.9M760.5 602.5h1.9M780.5 602.5h1.9M800.5 602.5h1.9M840.5 602.5h1.9M860.5 602.5h1.9M880.5 602.5h1.9M900.5 602.5h1.9M940.5 602.5h1.9M960.5 602.5h1.9M980.5 602.5h1.9M1000.5 602.5h1.9" stroke="#b6b6b6" stroke-width="1.9" fill="none"/>
<path d="M21.5 342.5H1021.5M521.5 17.5V667.5" stroke="#909090" stroke-width="1" fill="none"/>
<path d="M41.5 338.5v8M61.5 338.5v8M81.5 338.5v8M101.5 338.5v8M121.5 338.5v8M141.5 338.5v8M161.5 338.5v8M181.5 338.5v8M201.5 338.5v8M221.5 338.5v8M241.5 338.5v8M261.5 338.5v8M281.5 338.5v8M301.5 338.5v8M321.5 338.5v8M341.5 338.5v8M361.5 338.5v8M381.5 338.5v8M401.5 338.5v8M421.5 338.5v8M441.5 338.5v8M461.5 338.5v8M481.5 338.5v8M501.5 338.5v8M541.5 338.5v8M561.5 338.5v8M581.5 338.5v8M601.5 338.5v8M621.5 338.5v8M641.5 338.5v8M661.5 338.5v8M681.5 338.5v8M701.5 338.5v8M721.5 338.5v8M741.5 338.5v8M761.5 338.5v8M781.5 338.5v8M801.5 338.5v8M821.5 338.5v8M841.5 338.5v8M861.5 338.5v8M881.5 338.5v8M901.5 338.5v8M921.5 338.5v8M941.5 338.5v8M961.5 338.5v8M981.5 338.5v8M1001.5 338.5v8M517.5 30.5h8M517.5 43.5h8M517.5 56.5h8M517.5 69.5h8M517.5 82.5h8M517.5 95.5h8M517.5 108.5h8M517.5 121.5h8M517.5 134.5h8M517.5 147.5h8M517.5 160.5h8M517.5 173.5h8M517.5 186.5h8M517.5 199.5h8M517.5 212.5h8M517.5 225.5h8M517.5 238.5h8M517.5 251.5h8M517.5 264.5h8M517.5 277.5h8M517.5 290.5h8M517.5 303.5h8M517.5 316.5h8M517.5 329.5h8M517.5 355.5h8M517.5 368.5h8M517.5 381.5h8M517.5 394.5h8M517.5 407.5h8M517.5 420.5h8M517.5 433.5h8M517.5 446.5h8M517.5 459.5h8M517.5 472.5h8M517.5 485.5h8M517.5 498.5h8M517.5 511.5h8M517.5 524.5h8M517.5 537.5h8M517.5 550.5h8M517.5 563.5h8M517.5 576.5h8M517.5 589.5h8M517.5 602.5h8M517.5 615.5h8M517.5 628.5h8M517.5 641.5h8M517.5 654.5h8" stroke="#a8a8a8" stroke-width="1" fill="none"/>
<path d="M40.7 342.5h1.6M60.7 342.5h1.6M80.7 342.5h1.6M100.7 342.5h1.6M120.7 342.5h1.6M140.7 342.5h1.6M160.7 342.5h1.6M180.7 342.5h1.6M200.7 342.5h1.6M220.7 342.5h1.6M240.7 342.5h1.6M260.7 342.5h1.6M280.7 342.5h1.6M300.7 342.5h1.6M320.7 342.5h1.6M340.7 342.5h1.6M360.7 342.5h1.6M380.7 342.5h1.6M400.7 342.5h1.6M420.7 342.5h1.6M440.7 342.5h1.6M460.7 342.5h1.6M480.7 342.5h1.6M500.7 342.5h1.6M540.7 342.5h1.6M560.7 342.5h1.6M580.7 342.5h1.6M600.7 342.5h1.6M620.7 342.5h1.6M640.7 342.5h1.6M660.7 342.5h1.6M680.7 342.5h1.6M700.7 342.5h1.6M720.7 342.5h1.6M740.7 342.5h1.6M760.7 342.5h1.6M780.7 342.5h1.6M800.7 342.5h1.6M820.7 342.5h1.6M840.7 342.5h1.6M860.7 342.5h1.6M880.7 342.5h1.6M900.7 342.5h1.6M920.7 342.5h1.6M940.7 342.5h1.6M960.7 342.5h1.6M980.7 342.5h1.6M1000.7 342.5h1.6M520.7 30.5h1.6M520.7 43.5h1.6M520.7 56.5h1.6M520.7 69.5h1.6M520.7 82.5h1.6M520.7 95.5h1.6M520.7 108.5h1.6M520.7 121.5h1.6M520.7 134.5h1.6M520.7 147.5h1.6M520.7 160.5h1.6M520.7 173.5h1.6M520.7 186.5h1.6M520.7 199.5h1.6M520.7 212.5h1.6M520.7 225.5h1.6M520.7 238.5h1.6M520.7 251.5h1.6M520.7 264.5h1.6M520.7 277.5h1.6M520.7 290.5h1.6M520.7 303.5h1.6M520.7 316.5h1.6M520.7 329.5h1.6M520.7 355.5h1.6M520.7 368.5h1.6M520.7 381.5h1.6M520.7 394.5h1.6M520.7 407.5h1.6M520.7 420.5h1.6M520.7 433.5h1.6M520.7 446.5h1.6M520.7 459.5h1.6M520.7 472.5h1.6M520.7 485.5h1.6M520.7 498.5h1.6M520.7 511.5h1.6M520.7 524.5h1.6M520.7 537.5h1.6M520.7 550.5h1.6M520.7 563.5h1.6M520.7 576.5h1.6M520.7 589.5h1.6M520.7 602.5h1.6M520.7 615.5h1.6M520.7 628.5h1.6M520.7 641.5h1.6M520.7 654.5h1.6" stroke="#e8e8e8" stroke-width="1.6" fill="none"/>
<path d="M41.5 17.0v3M41.5 665.0v3M61.5 17.0v3M61.5 665.0v3M81.5 17.0v3M81.5 665.0v3M101.5 17.0v3M101.5 665.0v3M121.5 17.0v7M121.5 661.0v7M141.5 17.0v3M141.5 665.0v3M161.5 17.0v3M161.5 665.0v3M181.5 17.0v3M181.5 665.0v3M201.5 17.0v3M201.5 665.0v3M221.5 17.0v7M221.5 661.0v7M241.5 17.0v3M241.5 665.0v3M261.5 17.0v3M261.5 665.0v3M281.5 17.0v3M281.5 665.0v3M301.5 17.0v3M301.5 665.0v3M321.5 17.0v7M321.5 661.0v7M341.5 17.0v3M341.5 665.0v3M361.5 17.0v3M361.5 665.0v3M381.5 17.0v3M381.5 665.0v3M401.5 17.0v3M401.5 665.0v3M421.5 17.0v7M421.5 661.0v7M441.5 17.0v3M441.5 665.0v3M461.5 17.0v3M461.5 665.0v3M481.5 17.0v3M481.5 665.0v3M501.5 17.0v3M501.5 665.0v3M521.5 17.0v7M521.5 661.0v7M541.5 17.0v3M541.5 665.0v3M561.5 17.0v3M561.5 665.0v3M581.5 17.0v3M581.5 665.0v3M601.5 17.0v3M601.5 665.0v3M621.5 17.0v7M621.5 661.0v7M641.5 17.0v3M641.5 665.0v3M661.5 17.0v3M661.5 665.0v3M681.5 17.0v3M681.5 665.0v3M701.5 17.0v3M701.5 665.0v3M721.5 17.0v7M721.5 661.0v7M741.5 17.0v3M741.5 665.0v3M761.5 17.0v3M761.5 665.0v3M781.5 17.0v3M781.5 665.0v3M801.5 17.0v3M801.5 665.0v3M821.5 17.0v7M821.5 661.0v7M841.5 17.0v3M841.5 665.0v3M861.5 17.0v3M861.5 665.0v3M881.5 17.0v3M881.5 665.0v3M901.5 17.0v3M901.5 665.0v3M921.5 17.0v7M921.5 661.0v7M941.5 17.0v3M941.5 665.0v3M961.5 17.0v3M961.5 665.0v3M981.5 17.0v3M981.5 665.0v3M1001.5 17.0v3M1001.5 665.0v3M21.0 30.5h3M1019.0 30.5h3M21.0 43.5h3M1019.0 43.5h3M21.0 56.5h3M1019.0 56.5h3M21.0 69.5h3M1019.0 69.5h3M21.0 82.5h7M1015.0 82.5h7M21.0 95.5h3M1019.0 95.5h3M21.0 108.5h3M1019.0 108.5h3M21.0 121.5h3M1019.0 121.5h3M21.0 134.5h3M1019.0 134.5h3M21.0 147.5h7M1015.0 147.5h7M21.0 160.5h3M1019.0 160.5h3M21.0 173.5h3M1019.0 173.5h3M21.0 186.5h3M1019.0 186.5h3M21.0 199.5h3M1019.0 199.5h3M21.0 212.5h7M1015.0 212.5h7M21.0 225.5h3M1019.0 225.5h3M21.0 238.5h3M1019.0 238.5h3M21.0 251.5h3M1019.0 251.5h3M21.0 264.5h3M1019.0 264.5h3M21.0 277.5h7M1015.0 277.5h7M21.0 290.5h3M1019.0 290.5h3M21.0 303.5h3M1019.0 303.5h3M21.0 316.5h3M1019.0 316.5h3M21.0 329.5h3M1019.0 329.5h3M21.0 342.5h7M1015.0 342.5h7M21.0 355.5h3M1019.0 355.5h3M21.0 368.5h3M1019.0 368.5h3M21.0 381.5h3M1019.0 381.5h3M21.0 394.5h3M1019.0 394.5h3M21.0 407.5h7M1015.0 407.5h7M21.0 420.5h3M1019.0 420.5h3M21.0 433.5h3M1019.0 433.5h3M21.0 446.5h3M1019.0 446.5h3M21.0 459.5h3M1019.0 459.5h3M21.0 472.5h7M1015.0 472.5h7M21.0 485.5h3M1019.0 485.5h3M21.0 498.5h3M1019.0 498.5h3M21.0 511.5h3M1019.0 511.5h3M21.0 524.5h3M1019.0 524.5h3M21.0 537.5h7M1015.0 537.5h7M21.0 550.5h3M1019.0 550.5h3M21.0 563.5h3M1019.0 563.5h3M21.0 576.5h3M1019.0 576.5h3M21.0 589.5h3M1019.0 589.5h3M21.0 602.5h7M1015.0 602.5h7M21.0 615.5h3M1019.0 615.5h3M21.0 628.5h3M1019.0 628.5h3M21.0 641.5h3M1019.0 641.5h3M21.0 654.5h3M1019.0 654.5h3" stroke="#a8a8a8" stroke-width="1" fill="none"/>
</g>
<rect x="283" y="6" width="477" height="3" fill="#008400"/>
<path d="M284 2H281.5V14H284" stroke="#d0c0c0" stroke-width="1.6" fill="none"/>
<path d="M759 2H761.5V14H759" stroke="#d0c0c0" stroke-width="1.6" fill="none"/>
<path d="M517.5 1H525.5L521.5 5Z" fill="#ffa000"/>
<path d="M515.5 17H527.5L521.5 23.5Z" fill="#ffa000"/>
</g>
<text x="0" y="11" font-size="15" font-weight="bold" fill="#000" letter-spacing="-0.3">Tek</text>
<text x="26.9" y="10.4" font-size="12.8" fill="#fff" stroke="#fff" stroke-width="0.55" letter-spacing="0.85">Stop</text>
<path d="M-0.5 211.5L1.6 209.6H9.7L15.2 216.0L9.7 222.4H1.6L-0.5 220.5Z" fill="#000" stroke="#00e6e6" stroke-width="1.3"/>
<text x="5.9" y="220.3" font-size="12.5" fill="#00e6e6" text-anchor="middle" stroke="#00e6e6" stroke-width="0.5">2</text>
<path d="M-0.5 467.5L1.6 465.6H9.7L15.2 471.6L9.7 477.6H1.6L-0.5 475.7Z" fill="#a800a8" stroke="#a800a8" stroke-width="0.4"/>
<path d="M-0.5 466.4L1.6 464.5H9.7L15.2 470.5L9.7 476.5H1.6L-0.5 474.6Z" fill="#00c800" stroke="#00c800" stroke-width="0.3"/>
<text x="5.9" y="474.8" font-size="11.8" fill="#000" text-anchor="middle" stroke="#000" stroke-width="0.5">4</text>
<rect x="16.00" y="523.70" width="433.00" height="15.40" rx="4" ry="4" fill="#000" stroke="#c8c8d4" stroke-width="1"/>
<rect x="456.50" y="523.70" width="115.50" height="29.30" rx="4" ry="4" fill="#000" stroke="#c8c8d4" stroke-width="1"/>
<rect x="578.70" y="523.70" width="83.30" height="29.30" rx="4" ry="4" fill="#000" stroke="#c8c8d4" stroke-width="1"/>
<rect x="669.50" y="523.70" width="128.00" height="29.30" rx="4" ry="4" fill="#000" stroke="#c8c8d4" stroke-width="1"/>
<rect x="710.70" y="570.20" width="86.80" height="27.80" rx="4" ry="4" fill="#000" stroke="#c8c8d4" stroke-width="1"/>
<rect x="20.0" y="526.3" width="20.2" height="12.2" rx="6.1" ry="6.1" fill="#f6f600"/>
<text x="30.1" y="536.8" font-size="12" fill="#000" stroke="#000" stroke-width="0.3" text-anchor="middle">1</text>
<text x="93.10" y="535.90" font-size="12" fill="#f6f600" stroke="#f6f600" stroke-width="0.5" paint-order="stroke" letter-spacing="0.90" text-anchor="end">5.00 V</text>
<text x="111.8" y="532.3" font-size="7" font-weight="bold" fill="#f6f600" textLength="3.4" lengthAdjust="spacingAndGlyphs">B</text>
<text x="114.5" y="535.8" font-size="7" font-weight="bold" fill="#f6f600" textLength="4.9" lengthAdjust="spacingAndGlyphs">W</text>
<rect x="128.8" y="526.3" width="20.2" height="12.2" rx="6.1" ry="6.1" fill="#00e6e6"/>
<text x="138.8" y="536.8" font-size="12" fill="#000" stroke="#000" stroke-width="0.3" text-anchor="middle">2</text>
<text x="201.85" y="535.90" font-size="12" fill="#00e6e6" stroke="#00e6e6" stroke-width="0.5" paint-order="stroke" letter-spacing="0.90" text-anchor="end">10.0 V</text>
<text x="220.6" y="532.3" font-size="7" font-weight="bold" fill="#00e6e6" textLength="3.4" lengthAdjust="spacingAndGlyphs">B</text>
<text x="223.2" y="535.8" font-size="7" font-weight="bold" fill="#00e6e6" textLength="4.9" lengthAdjust="spacingAndGlyphs">W</text>
<rect x="237.5" y="526.3" width="20.2" height="12.2" rx="6.1" ry="6.1" fill="#cc00cc"/>
<text x="247.6" y="536.8" font-size="12" fill="#000" stroke="#000" stroke-width="0.3" text-anchor="middle">3</text>
<text x="310.60" y="535.90" font-size="12" fill="#cc00cc" stroke="#cc00cc" stroke-width="0.5" paint-order="stroke" letter-spacing="0.90" text-anchor="end">5.00 V</text>
<text x="329.3" y="532.3" font-size="7" font-weight="bold" fill="#cc00cc" textLength="3.4" lengthAdjust="spacingAndGlyphs">B</text>
<text x="332.0" y="535.8" font-size="7" font-weight="bold" fill="#cc00cc" textLength="4.9" lengthAdjust="spacingAndGlyphs">W</text>
<rect x="346.2" y="526.3" width="20.2" height="12.2" rx="6.1" ry="6.1" fill="#00c800"/>
<text x="356.4" y="536.8" font-size="12" fill="#000" stroke="#000" stroke-width="0.3" text-anchor="middle">4</text>
<text x="419.35" y="535.90" font-size="12" fill="#00c800" stroke="#00c800" stroke-width="0.5" paint-order="stroke" letter-spacing="0.90" text-anchor="end">10.0 V</text>
<text x="438.1" y="532.3" font-size="7" font-weight="bold" fill="#00c800" textLength="3.4" lengthAdjust="spacingAndGlyphs">B</text>
<text x="440.8" y="535.8" font-size="7" font-weight="bold" fill="#00c800" textLength="4.9" lengthAdjust="spacingAndGlyphs">W</text>
<text x="460.60" y="535.90" font-size="12" fill="#fff" stroke="#fff" stroke-width="0.5" paint-order="stroke" letter-spacing="1.20" text-anchor="start">2.00 s</text>
<text x="583.20" y="535.90" font-size="12" fill="#fff" stroke="#fff" stroke-width="0.5" paint-order="stroke" letter-spacing="1.25" text-anchor="start">500 S/s</text>
<text x="583.80" y="549.00" font-size="12" fill="#fff" stroke="#fff" stroke-width="0.5" paint-order="stroke" letter-spacing="1.38" text-anchor="start">10k points</text>
<rect x="694.5" y="526.5" width="19.5" height="11.7" rx="5.8" ry="5.8" fill="#f6f600"/>
<text x="704.2" y="536.5" font-size="12" fill="#000" stroke="#000" stroke-width="0.3" text-anchor="middle">1</text>
<path d="M725.3 528.6H728.6L731.4 535.3H735" stroke="#fff" stroke-width="1.5" fill="none"/>
<text x="792.30" y="535.90" font-size="12" fill="#fff" stroke="#fff" stroke-width="0.5" paint-order="stroke" letter-spacing="1.00" text-anchor="end">3.50 V</text>
<text x="714.60" y="583.20" font-size="12" fill="#fff" stroke="#fff" stroke-width="0.5" paint-order="stroke" letter-spacing="1.10" text-anchor="start">27 Nov 2024</text>
<text x="714.60" y="595.20" font-size="12" fill="#fff" stroke="#fff" stroke-width="0.5" paint-order="stroke" letter-spacing="1.35" text-anchor="start">12:09:18</text>
</svg></body></html>
